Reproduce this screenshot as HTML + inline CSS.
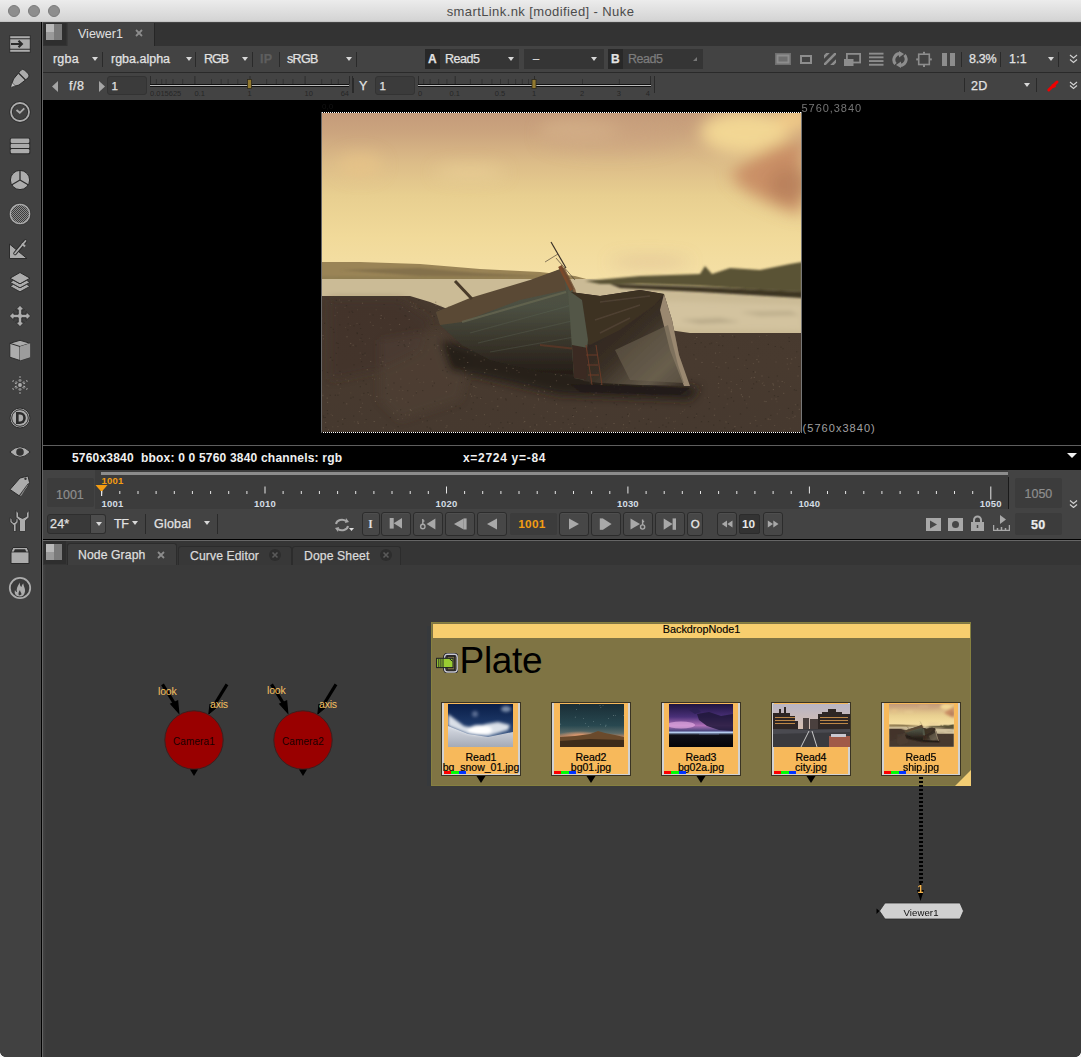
<!DOCTYPE html>
<html><head><meta charset="utf-8"><style>
*{box-sizing:border-box;margin:0;padding:0}
html,body{width:1081px;height:1057px;overflow:hidden;background:#3b3b3b;font-family:"Liberation Sans",sans-serif}
.a{position:absolute}
.t{white-space:nowrap;line-height:1}
.tb{color:#e2e2e2;font-size:12.5px;letter-spacing:0.2px;-webkit-text-stroke:0.25px currentColor}
.dd{position:absolute;width:0;height:0;border-left:3px solid transparent;border-right:3px solid transparent;border-top:4px solid #d8d8d8}
</style></head><body>
<div class="a" style="left:0px;top:0px;width:1081px;height:22px;background:linear-gradient(#ececec,#d2d2d2)"></div>
<div class="a" style="left:0px;top:21px;width:1081px;height:1px;background:#c4c4c4"></div>
<div class="a" style="left:0px;top:22px;width:1081px;height:1px;background:#1c1c1c"></div>
<div class="a" style="left:8px;top:5px;width:12px;height:12px;border-radius:50%;background:#8e8e8e;border:1px solid #7b7b7b"></div>
<div class="a" style="left:28px;top:5px;width:12px;height:12px;border-radius:50%;background:#8e8e8e;border:1px solid #7b7b7b"></div>
<div class="a" style="left:48px;top:5px;width:12px;height:12px;border-radius:50%;background:#8e8e8e;border:1px solid #7b7b7b"></div>
<div class="a t " style="left:0px;top:5px;width:1081px;text-align:center;font-size:13px;letter-spacing:0.4px;color:#4b4b4b;padding-left:0px">smartLink.nk [modified] - Nuke</div>
<div class="a" style="left:0px;top:22px;width:41px;height:1035px;background:#414141"></div>
<div class="a" style="left:40px;top:22px;width:1px;height:1035px;background:#474747"></div>
<div class="a" style="left:41px;top:22px;width:1px;height:1035px;background:#000"></div>
<div class="a" style="left:42px;top:22px;width:1px;height:1035px;background:#646464"></div>
<svg class="a" style="left:8px;top:32px;" width="24" height="24" viewBox="0 0 24 24"><rect x="1.7" y="3.7" width="20.6" height="16.6" fill="#acacac" stroke="#2b2b2b" stroke-width="1"/><path d="M1.7 6.8h20.6M1.7 17.2h20.6" stroke="#2b2b2b" stroke-width="1.1"/><path d="M3 12h10M10.5 8.8l3.3 3.2-3.3 3.2" stroke="#2b2b2b" stroke-width="2.2" fill="none"/></svg>
<svg class="a" style="left:8px;top:66px;" width="24" height="24" viewBox="0 0 24 24"><path d="M2.6 21.4L5.5 13L12.5 4.5Q14.5 2.5 16.5 4L20.5 8Q22 10 20 12L11 19z" fill="#acacac" stroke="#2b2b2b" stroke-width="1"/><path d="M10.5 7L17.5 14" stroke="#2b2b2b" stroke-width="1.3"/><path d="M2.6 21.4l1.5-4.8 3.3 3.3z" fill="#c4c4c4" stroke="#2b2b2b" stroke-width="0.6"/></svg>
<svg class="a" style="left:8px;top:100px;" width="24" height="24" viewBox="0 0 24 24"><circle cx="12" cy="12" r="9" fill="none" stroke="#2b2b2b" stroke-width="3.4"/><circle cx="12" cy="12" r="9" fill="none" stroke="#acacac" stroke-width="1.8"/><path d="M8.5 10l3.3 2.8 4.5-4.5" stroke="#acacac" stroke-width="1.8" fill="none"/></svg>
<svg class="a" style="left:8px;top:134px;" width="24" height="24" viewBox="0 0 24 24"><rect x="1.7" y="3.7" width="20.6" height="16.6" rx="1.5" fill="#2b2b2b"/><rect x="2.7" y="4.6" width="18.6" height="4.3" rx="1.2" fill="#acacac"/><rect x="2.7" y="9.8" width="18.6" height="4.3" rx="1.2" fill="#acacac"/><rect x="2.7" y="15" width="18.6" height="4.3" rx="1.2" fill="#acacac"/></svg>
<svg class="a" style="left:8px;top:168px;" width="24" height="24" viewBox="0 0 24 24"><circle cx="12" cy="12" r="9.6" fill="#acacac" stroke="#2b2b2b" stroke-width="1"/><path d="M12 2.5V12L3.9 16.7M12 12l8.1 4.7" stroke="#2b2b2b" stroke-width="1.3" fill="none"/></svg>
<svg class="a" style="left:8px;top:201.5px;" width="24" height="24" viewBox="0 0 24 24"><defs><pattern id="chk" width="2" height="2" patternUnits="userSpaceOnUse"><rect width="2" height="2" fill="#8a8a8a"/><rect width="1" height="1" fill="#3c3c3c"/><rect x="1" y="1" width="1" height="1" fill="#3c3c3c"/></pattern></defs><circle cx="12" cy="12" r="9.8" fill="url(#chk)" stroke="#acacac" stroke-width="1.6"/><circle cx="12" cy="12" r="10.8" fill="none" stroke="#2b2b2b" stroke-width="0.6"/></svg>
<svg class="a" style="left:7px;top:236.5px;" width="24" height="24" viewBox="0 0 24 24"><path d="M2.5 7L2.5 21.5H20z" fill="#acacac" stroke="#2b2b2b" stroke-width="1"/><path d="M8 16.5L18.5 4" stroke="#2b2b2b" stroke-width="3.5" stroke-linecap="round"/><path d="M8 16.5L18.5 4" stroke="#acacac" stroke-width="1.8" stroke-linecap="round"/><path d="M15 6.5l3 3" stroke="#acacac" stroke-width="2"/></svg>
<svg class="a" style="left:8px;top:270px;" width="24" height="24" viewBox="0 0 24 24"><path d="M2 16.3L12 21.8L22 16.3L18.5 14.3L12 17.8L5.5 14.3z" fill="#acacac" stroke="#2b2b2b" stroke-width="0.9"/><path d="M2 12.3L12 17.8L22 12.3L18.5 10.3L12 13.8L5.5 10.3z" fill="#acacac" stroke="#2b2b2b" stroke-width="0.9"/><path d="M12 2.5L22 8.2L12 13.8L2 8.2z" fill="#acacac" stroke="#2b2b2b" stroke-width="1"/></svg>
<svg class="a" style="left:8px;top:304px;" width="24" height="24" viewBox="0 0 24 24"><path d="M12 1.3L16.3 5.8H13.8V10.2H18.2V7.7L22.7 12L18.2 16.3V13.8H13.8V18.2H16.3L12 22.7L7.7 18.2H10.2V13.8H5.8V16.3L1.3 12L5.8 7.7V10.2H10.2V5.8H7.7z" fill="#acacac" stroke="#2b2b2b" stroke-width="1"/></svg>
<svg class="a" style="left:8px;top:338px;" width="24" height="24" viewBox="0 0 24 24"><path d="M12 2.3L22.2 5.3V19.2L12 22.5L1.8 19.2V5.3z" fill="#acacac" stroke="#2b2b2b" stroke-width="1"/><path d="M1.8 5.3L12 8.5L22.2 5.3M12 8.5V22.5" stroke="#2b2b2b" stroke-width="1" fill="none"/><path d="M12 8.5L22.2 5.3V19.2L12 22.5z" fill="#9c9c9c"/></svg>
<svg class="a" style="left:8px;top:373px;" width="24" height="24" viewBox="0 0 24 24"><circle cx="12" cy="12" r="2" fill="#acacac"/><circle cx="12.0" cy="7.5" r="1.4" fill="#acacac"/><circle cx="12.0" cy="4.0" r="1" fill="#acacac"/><path d="M12.0 10.0L12.0 2.5" stroke="#2e2e2e" stroke-width="0.6"/><circle cx="15.9" cy="9.8" r="1.4" fill="#acacac"/><circle cx="18.9" cy="8.0" r="1" fill="#acacac"/><path d="M13.7 11.0L20.2 7.3" stroke="#2e2e2e" stroke-width="0.6"/><circle cx="15.9" cy="14.2" r="1.4" fill="#acacac"/><circle cx="18.9" cy="16.0" r="1" fill="#acacac"/><path d="M13.7 13.0L20.2 16.8" stroke="#2e2e2e" stroke-width="0.6"/><circle cx="12.0" cy="16.5" r="1.4" fill="#acacac"/><circle cx="12.0" cy="20.0" r="1" fill="#acacac"/><path d="M12.0 14.0L12.0 21.5" stroke="#2e2e2e" stroke-width="0.6"/><circle cx="8.1" cy="14.2" r="1.4" fill="#acacac"/><circle cx="5.1" cy="16.0" r="1" fill="#acacac"/><path d="M10.3 13.0L3.8 16.8" stroke="#2e2e2e" stroke-width="0.6"/><circle cx="8.1" cy="9.8" r="1.4" fill="#acacac"/><circle cx="5.1" cy="8.0" r="1" fill="#acacac"/><path d="M10.3 11.0L3.8 7.2" stroke="#2e2e2e" stroke-width="0.6"/></svg>
<svg class="a" style="left:8px;top:405.6px;" width="24" height="24" viewBox="0 0 24 24"><circle cx="12" cy="12" r="10" fill="#acacac" stroke="#2b2b2b" stroke-width="1"/><circle cx="12" cy="12" r="8.3" fill="none" stroke="#2b2b2b" stroke-width="1"/><path d="M8 6h3.8a6 6 0 0 1 0 12H8z" fill="#2b2b2b"/><path d="M10.6 8.6h1.2a3.4 3.4 0 0 1 0 6.8h-1.2z" fill="#acacac"/></svg>
<svg class="a" style="left:8px;top:440px;" width="24" height="24" viewBox="0 0 24 24"><path d="M1.8 12Q12 1.5 22.2 12Q12 22.5 1.8 12z" fill="#acacac" stroke="#2b2b2b" stroke-width="1"/><circle cx="12" cy="12" r="3.8" fill="#333"/></svg>
<svg class="a" style="left:8px;top:474px;" width="24" height="24" viewBox="0 0 24 24"><path d="M2 15.5L12 4L20 2L21.5 8.5L19.5 13L11.5 22z" fill="#acacac" stroke="#2b2b2b" stroke-width="1"/><path d="M21.5 8.5L13.5 21.5L11.5 22z" fill="#8e8e8e"/><path d="M20.3 9.5L11 22" stroke="#2b2b2b" stroke-width="0.9"/><circle cx="17.5" cy="4.8" r="1.2" fill="#333"/></svg>
<svg class="a" style="left:8px;top:509px;" width="24" height="24" viewBox="0 0 24 24"><path d="M5.5 22.5V16L2 13.2V8.5L4 10.2V12.5L6 13.8L8 12.5V10.2L10 8.5V13.2L8 15.5V22.5z" fill="#acacac" stroke="#2b2b2b" stroke-width="0.8"/><path d="M11.5 22.5V11.5L8 8.5V1.5L10.5 4V7.5L14.5 9.5L18.5 7.5V4L21 1.5V8.5L17.5 11.5V22.5z" fill="#acacac" stroke="#2b2b2b" stroke-width="0.8"/></svg>
<svg class="a" style="left:8px;top:542.5px;" width="24" height="24" viewBox="0 0 24 24"><path d="M3 9L5 4.5H19L21 9V20.5H3z" fill="#acacac" stroke="#2b2b2b" stroke-width="1"/><path d="M5.7 9L6.8 6.3H17.2L18.3 9z" fill="#2e2e2e"/><path d="M3 9H21" stroke="#2b2b2b" stroke-width="0.8"/></svg>
<svg class="a" style="left:8px;top:576px;" width="24" height="24" viewBox="0 0 24 24"><circle cx="12" cy="12" r="10.2" fill="#3a3a3a" stroke="#acacac" stroke-width="1.8"/><path d="M12 20.5C7.5 20.5 6 17 7 14C7.5 15.5 8.5 16 9 16C8 13 9.5 10 12 6.5C11.5 9 12.5 10.5 13.5 11C13.5 9.5 14.5 8 15.5 7.5C15 9.5 17.5 12 17 15.5C16.5 18.5 15 20.5 12 20.5z" fill="#acacac"/><path d="M11 19.5C10 18 10.5 16 12 14C12 16 13.5 16.5 13.5 18.5z" fill="#3a3a3a"/></svg>
<div class="a" style="left:43px;top:22px;width:1038px;height:518px;background:#434343"></div>
<div class="a" style="left:43px;top:23px;width:1038px;height:23px;background:#333"></div>
<div class="a" style="left:44px;top:23px;width:22px;height:22px;background:#2e2e2e"></div>
<div class="a" style="left:46px;top:24px;width:16px;height:16px;background:linear-gradient(90deg,#b9b9b9 0 8px,#7b7b7b 8px);"></div>
<div class="a" style="left:46px;top:32px;width:8px;height:8px;background:#9a9a9a"></div>
<div class="a" style="left:67px;top:23px;width:88px;height:23px;background:#434343;border-right:1px solid #262626;border-left:1px solid #3a3a3a"></div>
<div class="a t " style="left:78px;top:28px;font-size:12.5px;color:#e0e0e0">Viewer1</div>
<svg class="a" style="left:135px;top:29px;" width="8" height="8" viewBox="0 0 8 8"><path d="M1 1l6 6M7 1l-6 6" stroke="#8c8c8c" stroke-width="1.8"/></svg>
<div class="a" style="left:43px;top:72px;width:1038px;height:1px;background:#2a2a2a"></div>
<div class="a t tb" style="left:53px;top:52.82px;font-size:12.5px;">rgba</div>
<div class="dd" style="left:92px;top:57px"></div>
<div class="a" style="left:102px;top:52px;width:1px;height:15px;background:#2a2a2a"></div>
<div class="a t tb" style="left:111px;top:52.82px;font-size:12.5px;letter-spacing:0px">rgba.alpha</div>
<div class="dd" style="left:186px;top:57px"></div>
<div class="a" style="left:195px;top:52px;width:1px;height:15px;background:#2a2a2a"></div>
<div class="a t tb" style="left:204px;top:52.82px;font-size:12.5px;letter-spacing:-1px">RGB</div>
<div class="dd" style="left:242px;top:57px"></div>
<div class="a" style="left:252px;top:52px;width:1px;height:15px;background:#2a2a2a"></div>
<div class="a t tb" style="left:260px;top:52.82px;font-size:12.5px;color:#5e5e5e;font-weight:bold">IP</div>
<div class="a" style="left:279px;top:52px;width:1px;height:15px;background:#2a2a2a"></div>
<div class="a t tb" style="left:287px;top:52.82px;font-size:12.5px;letter-spacing:-0.7px">sRGB</div>
<div class="dd" style="left:346px;top:57px"></div>
<div class="a" style="left:356px;top:52px;width:1px;height:15px;background:#2a2a2a"></div>
<div class="a" style="left:425px;top:49px;width:15px;height:20px;background:#282828"></div>
<div class="a t tb" style="left:428px;top:53.24px;font-size:12px;font-weight:bold">A</div>
<div class="a" style="left:440px;top:49px;width:79px;height:20px;background:#353535"></div>
<div class="a t tb" style="left:445px;top:52.82px;font-size:12.5px;letter-spacing:-0.5px">Read5</div>
<div class="dd" style="left:508px;top:57px"></div>
<div class="a" style="left:524px;top:49px;width:80px;height:20px;background:#353535"></div>
<div class="a t tb" style="left:533px;top:52.82px;font-size:12.5px;font-size:11px">&#8211;</div>
<div class="dd" style="left:591px;top:57px"></div>
<div class="a" style="left:608px;top:49px;width:15px;height:20px;background:#282828"></div>
<div class="a t tb" style="left:611px;top:53.24px;font-size:12px;font-weight:bold">B</div>
<div class="a" style="left:623px;top:49px;width:80px;height:20px;background:#353535"></div>
<div class="a t tb" style="left:628px;top:52.82px;font-size:12.5px;letter-spacing:-0.5px;color:#7c7c7c">Read5</div>
<svg class="a" style="left:692px;top:56px;" width="6" height="6" viewBox="0 0 6 6"><path d="M5 1L1 5h4z" fill="#777"/></svg>
<svg class="a" style="left:775px;top:53px;" width="16" height="12" viewBox="0 0 16 12"><rect x="0" y="0" width="16" height="12" fill="#6f6f6f"/><rect x="2.5" y="2.5" width="11" height="7" fill="none" stroke="#8d8d8d" stroke-width="2"/></svg>
<svg class="a" style="left:800px;top:55px;" width="12" height="9" viewBox="0 0 12 9"><rect x="1" y="1" width="10" height="7" fill="none" stroke="#8d8d8d" stroke-width="2"/></svg>
<svg class="a" style="left:824px;top:53px;" width="12" height="12" viewBox="0 0 12 12"><defs><clipPath id="cp1"><rect width="12" height="12"/></clipPath></defs><g clip-path="url(#cp1)" stroke="#8d8d8d" stroke-width="2.6"><path d="M-4 8L8 -4M0 12L12 0M4 16L16 4"/></g></svg>
<svg class="a" style="left:843px;top:52px;" width="19" height="15" viewBox="0 0 19 15"><rect x="3.9" y="1.9" width="13.2" height="8.6" fill="none" stroke="#8d8d8d" stroke-width="1.8"/><rect x="1" y="7" width="9.5" height="7" fill="#8d8d8d"/></svg>
<svg class="a" style="left:868px;top:52px;" width="16" height="14" viewBox="0 0 16 14"><rect x="1" y="0.7" width="14.5" height="1.9" fill="#8d8d8d"/><rect x="1" y="4.4" width="14.5" height="1.9" fill="#8d8d8d"/><rect x="1" y="8.1" width="14.5" height="1.9" fill="#8d8d8d"/><rect x="1" y="11.8" width="14.5" height="1.9" fill="#8d8d8d"/></svg>
<svg class="a" style="left:891px;top:51px;" width="18" height="17" viewBox="0 0 18 17"><path d="M9.5 2.5A6.3 6.3 0 0 0 4.5 13" stroke="#8d8d8d" stroke-width="3" fill="none"/><path d="M8.5 14.5A6.3 6.3 0 0 0 13.5 4" stroke="#8d8d8d" stroke-width="3" fill="none"/><path d="M8 0l5 3-5 3.5z" fill="#8d8d8d"/><path d="M10 17l-5-3 5-3.5z" fill="#8d8d8d"/></svg>
<svg class="a" style="left:915px;top:51px;" width="18" height="17" viewBox="0 0 18 17"><rect x="3.7" y="3.2" width="10.6" height="10.3" fill="none" stroke="#8d8d8d" stroke-width="1.6"/><rect x="8" y="0.8" width="2" height="2" fill="#8d8d8d"/><rect x="8" y="14" width="2" height="2" fill="#8d8d8d"/><rect x="1.2" y="7.4" width="2" height="2" fill="#8d8d8d"/><rect x="14.8" y="7.4" width="2" height="2" fill="#8d8d8d"/></svg>
<svg class="a" style="left:942px;top:53px;" width="13" height="13" viewBox="0 0 13 13"><rect x="0" y="0" width="5" height="13" fill="#8d8d8d"/><rect x="8" y="0" width="5" height="13" fill="#8d8d8d"/></svg>
<div class="a" style="left:961px;top:52px;width:1px;height:15px;background:#2a2a2a"></div>
<div class="a t tb" style="left:969px;top:52.82px;font-size:12.5px;letter-spacing:-0.3px">8.3%</div>
<div class="a" style="left:1000px;top:52px;width:1px;height:15px;background:#2a2a2a"></div>
<div class="a t tb" style="left:1009px;top:52.82px;font-size:12.5px;">1:1</div>
<div class="dd" style="left:1048px;top:57px"></div>
<div class="a" style="left:1058px;top:52px;width:1px;height:15px;background:#2a2a2a"></div>
<svg class="a" style="left:1069px;top:54px;" width="9" height="10" viewBox="0 0 9 10"><path d="M1 1l3.5 3 3.5-3M1 5.5l3.5 3 3.5-3" stroke="#cfcfcf" stroke-width="1.2" fill="none"/></svg>
<svg class="a" style="left:51.5px;top:80.5px;" width="7" height="11" viewBox="0 0 7 11"><path d="M6 0v11L0 5.5z" fill="#a5a5a5"/></svg>
<div class="a t tb" style="left:69px;top:80.42px;font-size:12.5px;letter-spacing:0.5px">f/8</div>
<svg class="a" style="left:98.5px;top:80.5px;" width="7" height="11" viewBox="0 0 7 11"><path d="M0 0v11l6-5.5z" fill="#a5a5a5"/></svg>
<div class="a" style="left:107px;top:76px;width:40px;height:19px;background:#3b3b3b;border:1px solid #333;border-radius:3px"></div>
<div class="a t tb" style="left:111.5px;top:81.47px;font-size:11.5px;">1</div>
<div class="a" style="left:353px;top:78px;width:1px;height:15px;background:#2a2a2a"></div>
<div class="a t tb" style="left:359px;top:79.92px;font-size:12.5px;">Y</div>
<div class="a" style="left:375px;top:76px;width:40px;height:19px;background:#3b3b3b;border:1px solid #333;border-radius:3px"></div>
<div class="a t tb" style="left:379.5px;top:81.47px;font-size:11.5px;">1</div>
<div class="a" style="left:964px;top:78px;width:1px;height:14px;background:#2a2a2a"></div>
<div class="a t tb" style="left:971px;top:79.92px;font-size:12.5px;">2D</div>
<div class="dd" style="left:1024px;top:83px"></div>
<div class="a" style="left:1036px;top:78px;width:1px;height:14px;background:#2a2a2a"></div>
<svg class="a" style="left:1046px;top:77px;" width="14" height="16" viewBox="0 0 14 16"><path d="M2.8 13L11 5" stroke="#f00000" stroke-width="3" stroke-linecap="round"/><path d="M5.5 7.5L9 6.5L10 10L7 11z" fill="#f00000"/></svg>
<svg class="a" style="left:1069px;top:81px;" width="9" height="9" viewBox="0 0 9 9"><path d="M1 1l3.5 3 3.5-3M1 4.5l3.5 3 3.5-3" stroke="#d4d4d4" stroke-width="1.1" fill="none"/></svg>
<svg class="a" style="left:150px;top:76px;" width="205" height="22" viewBox="0 0 205 22"><path d="M0.5 0V8" stroke="#2c2c2c" stroke-width="1"/><path d="M44.9 0V8" stroke="#2c2c2c" stroke-width="1"/><path d="M100.0 0V8" stroke="#2c2c2c" stroke-width="1"/><path d="M155.1 0V8" stroke="#2c2c2c" stroke-width="1"/><path d="M199.5 0V8" stroke="#2c2c2c" stroke-width="1"/><path d="M6.4 3V8" stroke="#333" stroke-width="1"/><path d="M11.7 3V8" stroke="#333" stroke-width="1"/><path d="M16.1 3V8" stroke="#333" stroke-width="1"/><path d="M23.0 3V8" stroke="#333" stroke-width="1"/><path d="M32.7 3V8" stroke="#333" stroke-width="1"/><path d="M61.5 3V8" stroke="#333" stroke-width="1"/><path d="M71.2 3V8" stroke="#333" stroke-width="1"/><path d="M78.1 3V8" stroke="#333" stroke-width="1"/><path d="M87.8 3V8" stroke="#333" stroke-width="1"/><path d="M116.6 3V8" stroke="#333" stroke-width="1"/><path d="M126.3 3V8" stroke="#333" stroke-width="1"/><path d="M133.2 3V8" stroke="#333" stroke-width="1"/><path d="M142.9 3V8" stroke="#333" stroke-width="1"/><path d="M171.7 3V8" stroke="#333" stroke-width="1"/><path d="M181.4 3V8" stroke="#333" stroke-width="1"/><path d="M188.3 3V8" stroke="#333" stroke-width="1"/><rect x="0" y="8" width="199" height="1" fill="#111"/><rect x="0" y="9" width="199" height="1" fill="#bdbdbd"/><rect x="0" y="10" width="199" height="1" fill="#111"/><path d="M202.5 0V17" stroke="#2a2a2a" stroke-width="1"/><text x="0.0" y="20" font-size="7.5" fill="#262626" text-anchor="start" font-family="Liberation Sans">0.015625</text><text x="44.4" y="20" font-size="7.5" fill="#262626" text-anchor="start" font-family="Liberation Sans">0.1</text><text x="99.5" y="20" font-size="7.5" fill="#262626" text-anchor="middle" font-family="Liberation Sans">1</text><text x="154.6" y="20" font-size="7.5" fill="#262626" text-anchor="start" font-family="Liberation Sans">10</text><text x="199.0" y="20" font-size="7.5" fill="#262626" text-anchor="end" font-family="Liberation Sans">64</text><rect x="97.5" y="3.5" width="4" height="9" fill="#937a30" stroke="#2e2a1c" stroke-width="0.8"/></svg>
<svg class="a" style="left:418px;top:76px;" width="239" height="22" viewBox="0 0 239 22"><path d="M0.5 0V8" stroke="#2c2c2c" stroke-width="1"/><path d="M37.2 0V8" stroke="#2c2c2c" stroke-width="1"/><path d="M116.5 0V8" stroke="#2c2c2c" stroke-width="1"/><path d="M232.5 0V8" stroke="#2c2c2c" stroke-width="1"/><path d="M5.7 3V8" stroke="#333" stroke-width="1"/><path d="M12.1 3V8" stroke="#333" stroke-width="1"/><path d="M20.6 3V8" stroke="#333" stroke-width="1"/><path d="M28.9 3V8" stroke="#333" stroke-width="1"/><path d="M52.4 3V8" stroke="#333" stroke-width="1"/><path d="M64.0 3V8" stroke="#333" stroke-width="1"/><path d="M73.9 3V8" stroke="#333" stroke-width="1"/><path d="M82.5 3V8" stroke="#333" stroke-width="1"/><path d="M90.4 3V8" stroke="#333" stroke-width="1"/><path d="M97.6 3V8" stroke="#333" stroke-width="1"/><path d="M104.3 3V8" stroke="#333" stroke-width="1"/><path d="M110.5 3V8" stroke="#333" stroke-width="1"/><path d="M164.5 3V8" stroke="#333" stroke-width="1"/><path d="M201.4 3V8" stroke="#333" stroke-width="1"/><rect x="0" y="8" width="233" height="1" fill="#111"/><rect x="0" y="9" width="233" height="1" fill="#bdbdbd"/><rect x="0" y="10" width="233" height="1" fill="#111"/><path d="M236.5 0V17" stroke="#2a2a2a" stroke-width="1"/><text x="0.0" y="20" font-size="7.5" fill="#262626" text-anchor="start" font-family="Liberation Sans">0</text><text x="36.7" y="20" font-size="7.5" fill="#262626" text-anchor="middle" font-family="Liberation Sans">0.1</text><text x="82.0" y="20" font-size="7.5" fill="#262626" text-anchor="middle" font-family="Liberation Sans">0.5</text><text x="116.0" y="20" font-size="7.5" fill="#262626" text-anchor="middle" font-family="Liberation Sans">1</text><text x="164.0" y="20" font-size="7.5" fill="#262626" text-anchor="middle" font-family="Liberation Sans">2</text><text x="200.9" y="20" font-size="7.5" fill="#262626" text-anchor="middle" font-family="Liberation Sans">3</text><text x="232.0" y="20" font-size="7.5" fill="#262626" text-anchor="end" font-family="Liberation Sans">4</text><rect x="114.0" y="3.5" width="4" height="9" fill="#937a30" stroke="#2e2a1c" stroke-width="0.8"/></svg>
<div class="a" style="left:43px;top:100px;width:1038px;height:370px;background:#000"></div>
<div class="a" style="left:43px;top:445px;width:1038px;height:1px;background:#5e5e5e"></div>
<svg class="a" style="left:321px;top:112px;" width="481" height="321" viewBox="0 0 481 321">
<defs>
<linearGradient id="sky" x1="0" y1="112" x2="0" y2="280" gradientUnits="userSpaceOnUse">
<stop offset="0" stop-color="#c49a7a"/><stop offset="0.12" stop-color="#cba47e"/><stop offset="0.3" stop-color="#dcbc88"/>
<stop offset="0.5" stop-color="#e8cf90"/><stop offset="0.75" stop-color="#f1da9a"/><stop offset="1" stop-color="#f5e0a6"/></linearGradient>
<filter id="b8" x="-50%" y="-50%" width="200%" height="200%"><feGaussianBlur stdDeviation="8"/></filter>
<filter id="b4" x="-50%" y="-50%" width="200%" height="200%"><feGaussianBlur stdDeviation="4"/></filter>
<filter id="b2" x="-30%" y="-30%" width="160%" height="160%"><feGaussianBlur stdDeviation="2"/></filter>
<filter id="b1" x="-20%" y="-20%" width="140%" height="140%"><feGaussianBlur stdDeviation="0.8"/></filter><filter id="b05" x="-10%" y="-10%" width="120%" height="120%"><feGaussianBlur stdDeviation="0.45"/></filter>
<linearGradient id="gnd" x1="0" y1="296" x2="0" y2="433" gradientUnits="userSpaceOnUse">
<stop offset="0" stop-color="#47392e"/><stop offset="0.5" stop-color="#483a2f"/><stop offset="1" stop-color="#46392f"/></linearGradient>
<linearGradient id="hull" x1="0" y1="270" x2="0" y2="375" gradientUnits="userSpaceOnUse">
<stop offset="0" stop-color="#525242"/><stop offset="0.35" stop-color="#4c5042"/><stop offset="0.7" stop-color="#38342a"/><stop offset="1" stop-color="#241c16"/></linearGradient>
<linearGradient id="hull2" x1="600" y1="300" x2="680" y2="385" gradientUnits="userSpaceOnUse">
<stop offset="0" stop-color="#2a2019"/><stop offset="0.45" stop-color="#3a3026"/><stop offset="0.8" stop-color="#625848"/><stop offset="1" stop-color="#3e342a"/></linearGradient>
</defs>
<g transform="translate(-321 -112)">
<rect x="321" y="112" width="481" height="321" fill="url(#sky)"/>
<g filter="url(#b8)">
<ellipse cx="360" cy="165" rx="22" ry="12" fill="#e8c488" opacity="0.7"/>
<ellipse cx="470" cy="172" rx="35" ry="7" fill="#ecd29a" opacity="0.6"/>
<ellipse cx="580" cy="130" rx="40" ry="10" fill="#e6c898" opacity="0.45"/>
<ellipse cx="745" cy="132" rx="45" ry="22" fill="#f6dc96" opacity="0.9"/><ellipse cx="795" cy="118" rx="20" ry="14" fill="#f2cc88" opacity="0.9"/>
<path d="M730 175Q770 140 802 140V215Q770 205 745 190z" fill="#c88a62" opacity="0.9"/>
<ellipse cx="790" cy="185" rx="22" ry="18" fill="#b47c5a" opacity="0.7"/>
<ellipse cx="610" cy="138" rx="70" ry="16" fill="#c8a07e" opacity="0.35"/>
<ellipse cx="650" cy="262" rx="40" ry="5" fill="#c8a088" opacity="0.4"/>
</g>
<!-- far hills left -->
<path d="M321 262L360 262L420 264L480 269L540 272L575 276L590 280L321 281z" fill="#9a8456"/>
<g filter="url(#b1)"><path d="M340 270L420 268L480 273L560 277L420 276z" fill="#7a6a46" opacity="0.7"/><path d="M321 276L450 277L560 279L590 281L321 281z" fill="#8a7a50" opacity="0.6"/></g>
<!-- water -->
<path d="M321 279L590 279L640 284L802 290L802 340L321 340z" fill="#cbbb96"/>
<g filter="url(#b2)"><path d="M620 300L802 305L802 330L640 328z" fill="#d6c6a2" opacity="0.7"/>
<path d="M680 320L720 318L740 322L700 324z" fill="#8a7a60" opacity="0.35"/><path d="M740 312L790 311L800 315L760 316z" fill="#8a7a60" opacity="0.3"/></g>
<!-- right land -->
<g filter="url(#b1)">
<path d="M585 281L640 276L700 274L705 266L712 274L730 268L760 270L790 264L802 262L802 292L760 290L700 286L640 284L600 284z" fill="#5a5236"/>
<path d="M610 284L700 287L802 292L802 298L700 292L620 288z" fill="#3e3424"/>
</g>
<!-- beach -->
<path d="M321 296L410 296L430 302L450 310L520 310L600 320L690 333L802 333L802 433L321 433z" fill="url(#gnd)"/>
<g filter="url(#b4)">
<path d="M330 300L400 300L430 320L420 350L380 370L330 380z" fill="#3e3228" opacity="0.55"/>
<path d="M380 340L440 330L470 360L460 400L400 420L380 400z" fill="#56463a" opacity="0.4"/>
<path d="M440 340L600 375L700 388L690 400L560 395L450 370z" fill="#231c16" opacity="0.9"/>
</g>
<rect x="578.8" y="346.7" width="1.2" height="1" fill="#6a5a48" opacity="0.55"/><rect x="362.3" y="353.9" width="1.2" height="1" fill="#2e261e" opacity="0.55"/><rect x="364.6" y="354.7" width="1.2" height="1" fill="#5e5040" opacity="0.55"/><rect x="380.5" y="327.4" width="1.2" height="1" fill="#5e5040" opacity="0.55"/><rect x="776.8" y="375.5" width="1.2" height="1" fill="#30281f" opacity="0.55"/><rect x="344.9" y="327.1" width="1.2" height="1" fill="#5e5040" opacity="0.55"/><rect x="733.9" y="336.4" width="1.2" height="1" fill="#2e261e" opacity="0.55"/><rect x="581.1" y="374.6" width="1.2" height="1" fill="#5e5040" opacity="0.55"/><rect x="600.7" y="383.9" width="1.2" height="1" fill="#7a6a58" opacity="0.55"/><rect x="367.9" y="393.8" width="1.2" height="1" fill="#5e5040" opacity="0.55"/><rect x="349.7" y="325.0" width="1.2" height="1" fill="#5e5040" opacity="0.55"/><rect x="602.7" y="358.6" width="1.2" height="1" fill="#7a6a58" opacity="0.55"/><rect x="440.5" y="321.4" width="1.2" height="1" fill="#2e261e" opacity="0.55"/><rect x="360.4" y="337.8" width="1.2" height="1" fill="#30281f" opacity="0.55"/><rect x="741.9" y="396.2" width="1.2" height="1" fill="#7a6a58" opacity="0.55"/><rect x="485.5" y="423.9" width="1.2" height="1" fill="#30281f" opacity="0.55"/><rect x="339.9" y="387.9" width="1.2" height="1" fill="#5e5040" opacity="0.55"/><rect x="596.6" y="416.1" width="1.2" height="1" fill="#7a6a58" opacity="0.55"/><rect x="484.6" y="344.6" width="1.2" height="1" fill="#30281f" opacity="0.55"/><rect x="599.9" y="359.0" width="1.2" height="1" fill="#6a5a48" opacity="0.55"/><rect x="775.4" y="361.5" width="1.2" height="1" fill="#6a5a48" opacity="0.55"/><rect x="350.2" y="392.4" width="1.2" height="1" fill="#5e5040" opacity="0.55"/><rect x="798.7" y="408.8" width="1.2" height="1" fill="#7a6a58" opacity="0.55"/><rect x="665.7" y="417.6" width="1.2" height="1" fill="#7a6a58" opacity="0.55"/><rect x="331.9" y="359.8" width="1.2" height="1" fill="#2e261e" opacity="0.55"/><rect x="614.9" y="364.1" width="1.2" height="1" fill="#2e261e" opacity="0.55"/><rect x="440.1" y="350.2" width="1.2" height="1" fill="#30281f" opacity="0.55"/><rect x="359.8" y="358.1" width="1.2" height="1" fill="#5e5040" opacity="0.55"/><rect x="528.1" y="371.8" width="1.2" height="1" fill="#30281f" opacity="0.55"/><rect x="795.5" y="389.9" width="1.2" height="1" fill="#30281f" opacity="0.55"/><rect x="405.8" y="328.5" width="1.2" height="1" fill="#2e261e" opacity="0.55"/><rect x="326.8" y="410.0" width="1.2" height="1" fill="#2e261e" opacity="0.55"/><rect x="522.5" y="347.2" width="1.2" height="1" fill="#5e5040" opacity="0.55"/><rect x="734.3" y="426.2" width="1.2" height="1" fill="#6a5a48" opacity="0.55"/><rect x="540.6" y="415.5" width="1.2" height="1" fill="#5e5040" opacity="0.55"/><rect x="509.7" y="351.3" width="1.2" height="1" fill="#6a5a48" opacity="0.55"/><rect x="552.6" y="351.5" width="1.2" height="1" fill="#2e261e" opacity="0.55"/><rect x="353.4" y="325.4" width="1.2" height="1" fill="#2e261e" opacity="0.55"/><rect x="373.9" y="378.7" width="1.2" height="1" fill="#6a5a48" opacity="0.55"/><rect x="321.1" y="317.6" width="1.2" height="1" fill="#6a5a48" opacity="0.55"/><rect x="777.4" y="380.5" width="1.2" height="1" fill="#6a5a48" opacity="0.55"/><rect x="741.6" y="380.5" width="1.2" height="1" fill="#2e261e" opacity="0.55"/><rect x="626.2" y="426.9" width="1.2" height="1" fill="#5e5040" opacity="0.55"/><rect x="729.3" y="432.1" width="1.2" height="1" fill="#30281f" opacity="0.55"/><rect x="390.3" y="399.0" width="1.2" height="1" fill="#7a6a58" opacity="0.55"/><rect x="551.2" y="391.1" width="1.2" height="1" fill="#5e5040" opacity="0.55"/><rect x="332.1" y="426.3" width="1.2" height="1" fill="#5e5040" opacity="0.55"/><rect x="495.0" y="390.8" width="1.2" height="1" fill="#6a5a48" opacity="0.55"/><rect x="727.7" y="367.5" width="1.2" height="1" fill="#2e261e" opacity="0.55"/><rect x="581.5" y="365.4" width="1.2" height="1" fill="#2e261e" opacity="0.55"/><rect x="616.0" y="404.2" width="1.2" height="1" fill="#2e261e" opacity="0.55"/><rect x="708.7" y="408.3" width="1.2" height="1" fill="#2e261e" opacity="0.55"/><rect x="417.2" y="364.0" width="1.2" height="1" fill="#6a5a48" opacity="0.55"/><rect x="797.0" y="404.5" width="1.2" height="1" fill="#30281f" opacity="0.55"/><rect x="445.7" y="391.2" width="1.2" height="1" fill="#7a6a58" opacity="0.55"/><rect x="536.1" y="424.4" width="1.2" height="1" fill="#7a6a58" opacity="0.55"/><rect x="780.4" y="346.6" width="1.2" height="1" fill="#2e261e" opacity="0.55"/><rect x="370.1" y="360.9" width="1.2" height="1" fill="#7a6a58" opacity="0.55"/><rect x="419.3" y="381.9" width="1.2" height="1" fill="#5e5040" opacity="0.55"/><rect x="725.2" y="362.2" width="1.2" height="1" fill="#7a6a58" opacity="0.55"/><rect x="638.7" y="420.7" width="1.2" height="1" fill="#2e261e" opacity="0.55"/><rect x="700.6" y="342.2" width="1.2" height="1" fill="#30281f" opacity="0.55"/><rect x="543.8" y="398.1" width="1.2" height="1" fill="#6a5a48" opacity="0.55"/><rect x="382.1" y="317.6" width="1.2" height="1" fill="#30281f" opacity="0.55"/><rect x="718.6" y="430.3" width="1.2" height="1" fill="#7a6a58" opacity="0.55"/><rect x="396.0" y="371.6" width="1.2" height="1" fill="#6a5a48" opacity="0.55"/><rect x="327.9" y="429.0" width="1.2" height="1" fill="#6a5a48" opacity="0.55"/><rect x="574.3" y="424.0" width="1.2" height="1" fill="#30281f" opacity="0.55"/><rect x="423.3" y="365.2" width="1.2" height="1" fill="#5e5040" opacity="0.55"/><rect x="477.8" y="371.0" width="1.2" height="1" fill="#2e261e" opacity="0.55"/><rect x="350.3" y="397.6" width="1.2" height="1" fill="#30281f" opacity="0.55"/><rect x="639.7" y="407.8" width="1.2" height="1" fill="#5e5040" opacity="0.55"/><rect x="523.3" y="421.8" width="1.2" height="1" fill="#5e5040" opacity="0.55"/><rect x="383.9" y="317.6" width="1.2" height="1" fill="#5e5040" opacity="0.55"/><rect x="330.0" y="356.9" width="1.2" height="1" fill="#2e261e" opacity="0.55"/><rect x="613.7" y="402.5" width="1.2" height="1" fill="#2e261e" opacity="0.55"/><rect x="403.9" y="361.4" width="1.2" height="1" fill="#6a5a48" opacity="0.55"/><rect x="570.3" y="372.5" width="1.2" height="1" fill="#6a5a48" opacity="0.55"/><rect x="413.0" y="302.7" width="1.2" height="1" fill="#6a5a48" opacity="0.55"/><rect x="565.2" y="373.4" width="1.2" height="1" fill="#6a5a48" opacity="0.55"/><rect x="534.2" y="380.3" width="1.2" height="1" fill="#5e5040" opacity="0.55"/><rect x="454.3" y="366.1" width="1.2" height="1" fill="#30281f" opacity="0.55"/><rect x="572.7" y="416.1" width="1.2" height="1" fill="#7a6a58" opacity="0.55"/><rect x="764.9" y="418.4" width="1.2" height="1" fill="#2e261e" opacity="0.55"/><rect x="379.5" y="357.1" width="1.2" height="1" fill="#6a5a48" opacity="0.55"/><rect x="643.8" y="355.3" width="1.2" height="1" fill="#2e261e" opacity="0.55"/><rect x="643.0" y="403.6" width="1.2" height="1" fill="#2e261e" opacity="0.55"/><rect x="772.9" y="384.5" width="1.2" height="1" fill="#7a6a58" opacity="0.55"/><rect x="389.8" y="417.1" width="1.2" height="1" fill="#30281f" opacity="0.55"/><rect x="426.6" y="426.5" width="1.2" height="1" fill="#30281f" opacity="0.55"/><rect x="660.7" y="432.2" width="1.2" height="1" fill="#30281f" opacity="0.55"/><rect x="474.2" y="395.2" width="1.2" height="1" fill="#6a5a48" opacity="0.55"/><rect x="483.6" y="359.4" width="1.2" height="1" fill="#6a5a48" opacity="0.55"/><rect x="505.9" y="367.4" width="1.2" height="1" fill="#7a6a58" opacity="0.55"/><rect x="794.8" y="404.2" width="1.2" height="1" fill="#6a5a48" opacity="0.55"/><rect x="361.4" y="334.0" width="1.2" height="1" fill="#2e261e" opacity="0.55"/><rect x="524.1" y="421.0" width="1.2" height="1" fill="#7a6a58" opacity="0.55"/><rect x="516.3" y="370.0" width="1.2" height="1" fill="#5e5040" opacity="0.55"/><rect x="595.5" y="392.3" width="1.2" height="1" fill="#6a5a48" opacity="0.55"/><rect x="455.2" y="405.7" width="1.2" height="1" fill="#2e261e" opacity="0.55"/><rect x="772.3" y="383.3" width="1.2" height="1" fill="#7a6a58" opacity="0.55"/><rect x="361.3" y="413.4" width="1.2" height="1" fill="#6a5a48" opacity="0.55"/><rect x="448.2" y="313.5" width="1.2" height="1" fill="#6a5a48" opacity="0.55"/><rect x="484.1" y="372.2" width="1.2" height="1" fill="#7a6a58" opacity="0.55"/><rect x="662.3" y="424.6" width="1.2" height="1" fill="#2e261e" opacity="0.55"/><rect x="447.0" y="321.6" width="1.2" height="1" fill="#7a6a58" opacity="0.55"/><rect x="623.4" y="369.2" width="1.2" height="1" fill="#2e261e" opacity="0.55"/><rect x="460.5" y="365.0" width="1.2" height="1" fill="#2e261e" opacity="0.55"/><rect x="451.1" y="406.3" width="1.2" height="1" fill="#7a6a58" opacity="0.55"/><rect x="338.8" y="299.5" width="1.2" height="1" fill="#5e5040" opacity="0.55"/><rect x="549.4" y="424.1" width="1.2" height="1" fill="#6a5a48" opacity="0.55"/><rect x="637.7" y="385.4" width="1.2" height="1" fill="#30281f" opacity="0.55"/><rect x="583.6" y="417.9" width="1.2" height="1" fill="#5e5040" opacity="0.55"/><rect x="431.4" y="324.0" width="1.2" height="1" fill="#2e261e" opacity="0.55"/><rect x="515.7" y="344.3" width="1.2" height="1" fill="#6a5a48" opacity="0.55"/><rect x="621.8" y="416.7" width="1.2" height="1" fill="#30281f" opacity="0.55"/><rect x="399.5" y="308.5" width="1.2" height="1" fill="#30281f" opacity="0.55"/><rect x="739.7" y="388.2" width="1.2" height="1" fill="#7a6a58" opacity="0.55"/><rect x="609.0" y="391.2" width="1.2" height="1" fill="#6a5a48" opacity="0.55"/><rect x="783.6" y="429.3" width="1.2" height="1" fill="#5e5040" opacity="0.55"/><rect x="409.0" y="342.6" width="1.2" height="1" fill="#6a5a48" opacity="0.55"/><rect x="549.3" y="365.4" width="1.2" height="1" fill="#2e261e" opacity="0.55"/><rect x="440.4" y="402.6" width="1.2" height="1" fill="#6a5a48" opacity="0.55"/><rect x="448.1" y="309.2" width="1.2" height="1" fill="#30281f" opacity="0.55"/><rect x="603.3" y="350.6" width="1.2" height="1" fill="#7a6a58" opacity="0.55"/><rect x="602.7" y="369.0" width="1.2" height="1" fill="#2e261e" opacity="0.55"/><rect x="637.3" y="394.4" width="1.2" height="1" fill="#5e5040" opacity="0.55"/><rect x="669.3" y="384.5" width="1.2" height="1" fill="#6a5a48" opacity="0.55"/><rect x="717.8" y="394.2" width="1.2" height="1" fill="#5e5040" opacity="0.55"/><rect x="622.7" y="396.8" width="1.2" height="1" fill="#5e5040" opacity="0.55"/><rect x="388.0" y="368.2" width="1.2" height="1" fill="#5e5040" opacity="0.55"/><rect x="594.4" y="407.6" width="1.2" height="1" fill="#6a5a48" opacity="0.55"/><rect x="718.5" y="376.4" width="1.2" height="1" fill="#2e261e" opacity="0.55"/><rect x="361.9" y="302.7" width="1.2" height="1" fill="#7a6a58" opacity="0.55"/><rect x="782.5" y="348.2" width="1.2" height="1" fill="#30281f" opacity="0.55"/><rect x="589.7" y="382.4" width="1.2" height="1" fill="#5e5040" opacity="0.55"/><rect x="648.4" y="363.5" width="1.2" height="1" fill="#6a5a48" opacity="0.55"/><rect x="769.5" y="419.1" width="1.2" height="1" fill="#6a5a48" opacity="0.55"/><rect x="356.8" y="333.1" width="1.2" height="1" fill="#2e261e" opacity="0.55"/><rect x="432.0" y="385.4" width="1.2" height="1" fill="#30281f" opacity="0.55"/><rect x="558.6" y="349.0" width="1.2" height="1" fill="#30281f" opacity="0.55"/><rect x="758.9" y="336.1" width="1.2" height="1" fill="#6a5a48" opacity="0.55"/><rect x="617.8" y="384.4" width="1.2" height="1" fill="#6a5a48" opacity="0.55"/><rect x="609.5" y="342.1" width="1.2" height="1" fill="#7a6a58" opacity="0.55"/><rect x="553.0" y="363.1" width="1.2" height="1" fill="#6a5a48" opacity="0.55"/><rect x="653.9" y="388.9" width="1.2" height="1" fill="#7a6a58" opacity="0.55"/><rect x="545.1" y="401.3" width="1.2" height="1" fill="#5e5040" opacity="0.55"/><rect x="416.8" y="430.0" width="1.2" height="1" fill="#30281f" opacity="0.55"/><rect x="329.4" y="359.4" width="1.2" height="1" fill="#5e5040" opacity="0.55"/><rect x="786.7" y="358.1" width="1.2" height="1" fill="#7a6a58" opacity="0.55"/><rect x="507.1" y="421.7" width="1.2" height="1" fill="#2e261e" opacity="0.55"/><rect x="356.9" y="309.3" width="1.2" height="1" fill="#5e5040" opacity="0.55"/><rect x="446.9" y="345.9" width="1.2" height="1" fill="#5e5040" opacity="0.55"/><rect x="715.5" y="366.2" width="1.2" height="1" fill="#6a5a48" opacity="0.55"/><rect x="752.8" y="363.1" width="1.2" height="1" fill="#6a5a48" opacity="0.55"/><rect x="397.5" y="426.2" width="1.2" height="1" fill="#30281f" opacity="0.55"/><rect x="516.0" y="395.9" width="1.2" height="1" fill="#30281f" opacity="0.55"/><rect x="682.1" y="411.1" width="1.2" height="1" fill="#6a5a48" opacity="0.55"/><rect x="326.6" y="397.6" width="1.2" height="1" fill="#7a6a58" opacity="0.55"/><rect x="500.0" y="350.4" width="1.2" height="1" fill="#5e5040" opacity="0.55"/><rect x="357.7" y="422.9" width="1.2" height="1" fill="#7a6a58" opacity="0.55"/><rect x="731.9" y="335.2" width="1.2" height="1" fill="#6a5a48" opacity="0.55"/><rect x="722.5" y="335.8" width="1.2" height="1" fill="#2e261e" opacity="0.55"/><rect x="440.9" y="333.1" width="1.2" height="1" fill="#5e5040" opacity="0.55"/><rect x="472.8" y="402.2" width="1.2" height="1" fill="#30281f" opacity="0.55"/><rect x="746.3" y="407.4" width="1.2" height="1" fill="#30281f" opacity="0.55"/><rect x="760.4" y="424.9" width="1.2" height="1" fill="#5e5040" opacity="0.55"/><rect x="418.9" y="308.0" width="1.2" height="1" fill="#30281f" opacity="0.55"/><rect x="537.9" y="399.4" width="1.2" height="1" fill="#7a6a58" opacity="0.55"/><rect x="554.6" y="421.0" width="1.2" height="1" fill="#5e5040" opacity="0.55"/><rect x="382.2" y="361.2" width="1.2" height="1" fill="#7a6a58" opacity="0.55"/><rect x="676.3" y="385.8" width="1.2" height="1" fill="#30281f" opacity="0.55"/><rect x="589.1" y="350.6" width="1.2" height="1" fill="#2e261e" opacity="0.55"/><rect x="561.8" y="407.4" width="1.2" height="1" fill="#5e5040" opacity="0.55"/><rect x="426.8" y="420.3" width="1.2" height="1" fill="#30281f" opacity="0.55"/><rect x="526.6" y="371.5" width="1.2" height="1" fill="#2e261e" opacity="0.55"/><rect x="364.6" y="343.5" width="1.2" height="1" fill="#6a5a48" opacity="0.55"/><rect x="474.6" y="347.1" width="1.2" height="1" fill="#5e5040" opacity="0.55"/><rect x="418.2" y="299.7" width="1.2" height="1" fill="#30281f" opacity="0.55"/><rect x="505.1" y="398.4" width="1.2" height="1" fill="#2e261e" opacity="0.55"/><rect x="502.3" y="343.0" width="1.2" height="1" fill="#6a5a48" opacity="0.55"/><rect x="560.6" y="375.1" width="1.2" height="1" fill="#7a6a58" opacity="0.55"/><rect x="381.5" y="365.5" width="1.2" height="1" fill="#2e261e" opacity="0.55"/><rect x="365.5" y="419.0" width="1.2" height="1" fill="#30281f" opacity="0.55"/><rect x="513.3" y="357.6" width="1.2" height="1" fill="#7a6a58" opacity="0.55"/><rect x="729.2" y="415.7" width="1.2" height="1" fill="#6a5a48" opacity="0.55"/><rect x="382.2" y="354.8" width="1.2" height="1" fill="#30281f" opacity="0.55"/><rect x="786.7" y="363.6" width="1.2" height="1" fill="#6a5a48" opacity="0.55"/><rect x="509.3" y="423.0" width="1.2" height="1" fill="#5e5040" opacity="0.55"/><rect x="732.5" y="429.2" width="1.2" height="1" fill="#2e261e" opacity="0.55"/><rect x="394.1" y="429.2" width="1.2" height="1" fill="#6a5a48" opacity="0.55"/><rect x="773.9" y="395.2" width="1.2" height="1" fill="#30281f" opacity="0.55"/><rect x="361.9" y="402.7" width="1.2" height="1" fill="#6a5a48" opacity="0.55"/><rect x="763.5" y="384.8" width="1.2" height="1" fill="#7a6a58" opacity="0.55"/><rect x="783.9" y="382.2" width="1.2" height="1" fill="#5e5040" opacity="0.55"/><rect x="627.1" y="392.0" width="1.2" height="1" fill="#6a5a48" opacity="0.55"/><rect x="368.8" y="337.8" width="1.2" height="1" fill="#5e5040" opacity="0.55"/><rect x="413.2" y="332.5" width="1.2" height="1" fill="#5e5040" opacity="0.55"/><rect x="321.6" y="370.1" width="1.2" height="1" fill="#30281f" opacity="0.55"/><rect x="574.1" y="371.4" width="1.2" height="1" fill="#6a5a48" opacity="0.55"/><rect x="783.1" y="392.8" width="1.2" height="1" fill="#7a6a58" opacity="0.55"/><rect x="347.6" y="323.4" width="1.2" height="1" fill="#30281f" opacity="0.55"/><rect x="360.0" y="328.0" width="1.2" height="1" fill="#30281f" opacity="0.55"/><rect x="337.4" y="343.0" width="1.2" height="1" fill="#30281f" opacity="0.55"/><rect x="495.3" y="350.9" width="1.2" height="1" fill="#6a5a48" opacity="0.55"/><rect x="704.4" y="397.5" width="1.2" height="1" fill="#5e5040" opacity="0.55"/><rect x="353.4" y="364.4" width="1.2" height="1" fill="#2e261e" opacity="0.55"/><rect x="470.9" y="408.5" width="1.2" height="1" fill="#2e261e" opacity="0.55"/><rect x="621.0" y="380.0" width="1.2" height="1" fill="#2e261e" opacity="0.55"/><rect x="554.3" y="420.8" width="1.2" height="1" fill="#6a5a48" opacity="0.55"/><rect x="345.9" y="305.2" width="1.2" height="1" fill="#30281f" opacity="0.55"/><rect x="537.3" y="393.8" width="1.2" height="1" fill="#7a6a58" opacity="0.55"/><rect x="673.4" y="432.7" width="1.2" height="1" fill="#2e261e" opacity="0.55"/><rect x="771.2" y="398.5" width="1.2" height="1" fill="#6a5a48" opacity="0.55"/><rect x="471.0" y="395.7" width="1.2" height="1" fill="#7a6a58" opacity="0.55"/><rect x="794.8" y="357.2" width="1.2" height="1" fill="#6a5a48" opacity="0.55"/><rect x="322.4" y="335.1" width="1.2" height="1" fill="#7a6a58" opacity="0.55"/><rect x="523.1" y="417.4" width="1.2" height="1" fill="#5e5040" opacity="0.55"/><rect x="492.5" y="408.7" width="1.2" height="1" fill="#30281f" opacity="0.55"/><rect x="363.2" y="392.9" width="1.2" height="1" fill="#2e261e" opacity="0.55"/><rect x="500.3" y="422.1" width="1.2" height="1" fill="#2e261e" opacity="0.55"/><rect x="476.5" y="397.3" width="1.2" height="1" fill="#30281f" opacity="0.55"/><rect x="335.6" y="352.9" width="1.2" height="1" fill="#30281f" opacity="0.55"/><rect x="340.6" y="301.7" width="1.2" height="1" fill="#6a5a48" opacity="0.55"/><rect x="414.8" y="305.5" width="1.2" height="1" fill="#5e5040" opacity="0.55"/><rect x="781.6" y="380.9" width="1.2" height="1" fill="#7a6a58" opacity="0.55"/><rect x="680.0" y="390.8" width="1.2" height="1" fill="#7a6a58" opacity="0.55"/><rect x="464.1" y="395.1" width="1.2" height="1" fill="#5e5040" opacity="0.55"/><rect x="761.8" y="383.2" width="1.2" height="1" fill="#6a5a48" opacity="0.55"/><rect x="332.7" y="328.8" width="1.2" height="1" fill="#30281f" opacity="0.55"/><rect x="665.2" y="360.3" width="1.2" height="1" fill="#30281f" opacity="0.55"/><rect x="700.9" y="421.2" width="1.2" height="1" fill="#30281f" opacity="0.55"/><rect x="384.8" y="364.5" width="1.2" height="1" fill="#6a5a48" opacity="0.55"/><rect x="707.0" y="397.4" width="1.2" height="1" fill="#2e261e" opacity="0.55"/><rect x="474.7" y="346.2" width="1.2" height="1" fill="#5e5040" opacity="0.55"/><rect x="359.0" y="323.8" width="1.2" height="1" fill="#2e261e" opacity="0.55"/><rect x="440.0" y="305.8" width="1.2" height="1" fill="#6a5a48" opacity="0.55"/><rect x="552.7" y="371.1" width="1.2" height="1" fill="#2e261e" opacity="0.55"/><rect x="792.5" y="417.2" width="1.2" height="1" fill="#6a5a48" opacity="0.55"/><rect x="448.4" y="308.4" width="1.2" height="1" fill="#6a5a48" opacity="0.55"/><rect x="523.5" y="431.4" width="1.2" height="1" fill="#30281f" opacity="0.55"/><rect x="404.3" y="315.1" width="1.2" height="1" fill="#30281f" opacity="0.55"/><rect x="619.4" y="388.7" width="1.2" height="1" fill="#5e5040" opacity="0.55"/><rect x="728.4" y="387.4" width="1.2" height="1" fill="#6a5a48" opacity="0.55"/><rect x="696.1" y="337.0" width="1.2" height="1" fill="#7a6a58" opacity="0.55"/><rect x="593.7" y="347.7" width="1.2" height="1" fill="#7a6a58" opacity="0.55"/><rect x="416.8" y="330.7" width="1.2" height="1" fill="#2e261e" opacity="0.55"/><rect x="434.3" y="335.3" width="1.2" height="1" fill="#5e5040" opacity="0.55"/><rect x="411.5" y="305.8" width="1.2" height="1" fill="#7a6a58" opacity="0.55"/><rect x="798.4" y="366.0" width="1.2" height="1" fill="#2e261e" opacity="0.55"/><rect x="323.2" y="417.1" width="1.2" height="1" fill="#2e261e" opacity="0.55"/><rect x="725.3" y="421.4" width="1.2" height="1" fill="#6a5a48" opacity="0.55"/><rect x="345.2" y="378.7" width="1.2" height="1" fill="#5e5040" opacity="0.55"/><rect x="414.4" y="307.2" width="1.2" height="1" fill="#5e5040" opacity="0.55"/><rect x="737.6" y="358.1" width="1.2" height="1" fill="#7a6a58" opacity="0.55"/><rect x="693.8" y="387.4" width="1.2" height="1" fill="#6a5a48" opacity="0.55"/><rect x="371.9" y="378.1" width="1.2" height="1" fill="#5e5040" opacity="0.55"/><rect x="673.2" y="421.3" width="1.2" height="1" fill="#6a5a48" opacity="0.55"/><rect x="714.9" y="352.6" width="1.2" height="1" fill="#7a6a58" opacity="0.55"/><rect x="410.1" y="339.5" width="1.2" height="1" fill="#2e261e" opacity="0.55"/><rect x="336.1" y="364.4" width="1.2" height="1" fill="#30281f" opacity="0.55"/><rect x="351.4" y="310.8" width="1.2" height="1" fill="#30281f" opacity="0.55"/><rect x="577.9" y="385.8" width="1.2" height="1" fill="#30281f" opacity="0.55"/><rect x="655.5" y="352.7" width="1.2" height="1" fill="#7a6a58" opacity="0.55"/><rect x="642.2" y="353.8" width="1.2" height="1" fill="#6a5a48" opacity="0.55"/><rect x="471.2" y="374.0" width="1.2" height="1" fill="#7a6a58" opacity="0.55"/><rect x="689.8" y="406.1" width="1.2" height="1" fill="#2e261e" opacity="0.55"/><rect x="508.9" y="352.1" width="1.2" height="1" fill="#6a5a48" opacity="0.55"/><rect x="375.6" y="309.3" width="1.2" height="1" fill="#5e5040" opacity="0.55"/><rect x="745.6" y="359.7" width="1.2" height="1" fill="#2e261e" opacity="0.55"/><rect x="383.5" y="304.0" width="1.2" height="1" fill="#2e261e" opacity="0.55"/><rect x="629.2" y="420.7" width="1.2" height="1" fill="#6a5a48" opacity="0.55"/><rect x="596.5" y="423.1" width="1.2" height="1" fill="#5e5040" opacity="0.55"/><rect x="403.6" y="344.3" width="1.2" height="1" fill="#2e261e" opacity="0.55"/><rect x="571.7" y="422.9" width="1.2" height="1" fill="#6a5a48" opacity="0.55"/><rect x="505.6" y="399.5" width="1.2" height="1" fill="#2e261e" opacity="0.55"/><rect x="466.1" y="410.9" width="1.2" height="1" fill="#6a5a48" opacity="0.55"/><rect x="790.2" y="362.7" width="1.2" height="1" fill="#6a5a48" opacity="0.55"/><rect x="613.3" y="383.5" width="1.2" height="1" fill="#6a5a48" opacity="0.55"/><rect x="755.9" y="381.4" width="1.2" height="1" fill="#2e261e" opacity="0.55"/><rect x="629.0" y="413.5" width="1.2" height="1" fill="#5e5040" opacity="0.55"/><rect x="515.6" y="412.1" width="1.2" height="1" fill="#30281f" opacity="0.55"/><rect x="409.0" y="326.7" width="1.2" height="1" fill="#30281f" opacity="0.55"/><rect x="787.9" y="407.9" width="1.2" height="1" fill="#2e261e" opacity="0.55"/><rect x="340.8" y="373.5" width="1.2" height="1" fill="#6a5a48" opacity="0.55"/><rect x="508.5" y="359.0" width="1.2" height="1" fill="#7a6a58" opacity="0.55"/><rect x="440.9" y="349.9" width="1.2" height="1" fill="#7a6a58" opacity="0.55"/><rect x="535.9" y="356.6" width="1.2" height="1" fill="#6a5a48" opacity="0.55"/><rect x="322.7" y="431.1" width="1.2" height="1" fill="#30281f" opacity="0.55"/><rect x="434.2" y="400.8" width="1.2" height="1" fill="#30281f" opacity="0.55"/><rect x="723.4" y="407.2" width="1.2" height="1" fill="#30281f" opacity="0.55"/><rect x="372.5" y="314.5" width="1.2" height="1" fill="#30281f" opacity="0.55"/><rect x="496.7" y="406.1" width="1.2" height="1" fill="#5e5040" opacity="0.55"/><rect x="673.8" y="402.8" width="1.2" height="1" fill="#5e5040" opacity="0.55"/><rect x="359.5" y="399.3" width="1.2" height="1" fill="#30281f" opacity="0.55"/><rect x="635.0" y="403.7" width="1.2" height="1" fill="#6a5a48" opacity="0.55"/><rect x="733.3" y="432.5" width="1.2" height="1" fill="#6a5a48" opacity="0.55"/><rect x="414.2" y="430.5" width="1.2" height="1" fill="#30281f" opacity="0.55"/><rect x="459.5" y="407.3" width="1.2" height="1" fill="#2e261e" opacity="0.55"/><rect x="651.0" y="395.1" width="1.2" height="1" fill="#2e261e" opacity="0.55"/><rect x="352.5" y="344.7" width="1.2" height="1" fill="#7a6a58" opacity="0.55"/><rect x="397.4" y="418.9" width="1.2" height="1" fill="#7a6a58" opacity="0.55"/><rect x="756.3" y="359.1" width="1.2" height="1" fill="#7a6a58" opacity="0.55"/><rect x="562.6" y="422.1" width="1.2" height="1" fill="#2e261e" opacity="0.55"/><rect x="605.7" y="380.8" width="1.2" height="1" fill="#2e261e" opacity="0.55"/><rect x="408.6" y="318.9" width="1.2" height="1" fill="#7a6a58" opacity="0.55"/><rect x="647.9" y="418.8" width="1.2" height="1" fill="#2e261e" opacity="0.55"/><rect x="733.8" y="428.4" width="1.2" height="1" fill="#30281f" opacity="0.55"/><rect x="588.0" y="375.9" width="1.2" height="1" fill="#6a5a48" opacity="0.55"/><rect x="442.2" y="369.9" width="1.2" height="1" fill="#30281f" opacity="0.55"/><rect x="675.9" y="347.5" width="1.2" height="1" fill="#30281f" opacity="0.55"/><rect x="797.4" y="375.5" width="1.2" height="1" fill="#7a6a58" opacity="0.55"/><rect x="431.7" y="380.7" width="1.2" height="1" fill="#6a5a48" opacity="0.55"/><rect x="463.6" y="367.2" width="1.2" height="1" fill="#7a6a58" opacity="0.55"/><rect x="628.5" y="430.8" width="1.2" height="1" fill="#5e5040" opacity="0.55"/><rect x="767.6" y="418.8" width="1.2" height="1" fill="#6a5a48" opacity="0.55"/><rect x="461.0" y="382.1" width="1.2" height="1" fill="#30281f" opacity="0.55"/><rect x="567.6" y="418.8" width="1.2" height="1" fill="#2e261e" opacity="0.55"/><rect x="555.9" y="380.3" width="1.2" height="1" fill="#6a5a48" opacity="0.55"/><rect x="601.7" y="377.1" width="1.2" height="1" fill="#2e261e" opacity="0.55"/><rect x="497.2" y="409.7" width="1.2" height="1" fill="#2e261e" opacity="0.55"/><rect x="385.8" y="424.4" width="1.2" height="1" fill="#2e261e" opacity="0.55"/><rect x="661.3" y="358.3" width="1.2" height="1" fill="#6a5a48" opacity="0.55"/><rect x="628.0" y="415.5" width="1.2" height="1" fill="#7a6a58" opacity="0.55"/><rect x="326.5" y="384.7" width="1.2" height="1" fill="#5e5040" opacity="0.55"/><rect x="750.4" y="377.9" width="1.2" height="1" fill="#5e5040" opacity="0.55"/><rect x="534.4" y="424.5" width="1.2" height="1" fill="#30281f" opacity="0.55"/><rect x="440.5" y="419.9" width="1.2" height="1" fill="#6a5a48" opacity="0.55"/><rect x="350.6" y="300.4" width="1.2" height="1" fill="#2e261e" opacity="0.55"/><rect x="435.3" y="304.9" width="1.2" height="1" fill="#6a5a48" opacity="0.55"/><rect x="326.9" y="371.9" width="1.2" height="1" fill="#2e261e" opacity="0.55"/><rect x="389.4" y="324.1" width="1.2" height="1" fill="#5e5040" opacity="0.55"/><rect x="630.1" y="385.1" width="1.2" height="1" fill="#30281f" opacity="0.55"/><rect x="344.3" y="418.0" width="1.2" height="1" fill="#30281f" opacity="0.55"/><rect x="727.2" y="398.3" width="1.2" height="1" fill="#30281f" opacity="0.55"/><rect x="359.7" y="386.2" width="1.2" height="1" fill="#2e261e" opacity="0.55"/><rect x="429.7" y="311.3" width="1.2" height="1" fill="#2e261e" opacity="0.55"/><rect x="749.7" y="422.8" width="1.2" height="1" fill="#7a6a58" opacity="0.55"/><rect x="587.4" y="356.3" width="1.2" height="1" fill="#5e5040" opacity="0.55"/><rect x="788.5" y="337.2" width="1.2" height="1" fill="#2e261e" opacity="0.55"/><rect x="362.1" y="366.0" width="1.2" height="1" fill="#2e261e" opacity="0.55"/><rect x="446.2" y="329.1" width="1.2" height="1" fill="#2e261e" opacity="0.55"/><rect x="775.4" y="398.5" width="1.2" height="1" fill="#7a6a58" opacity="0.55"/><rect x="413.3" y="349.9" width="1.2" height="1" fill="#5e5040" opacity="0.55"/><rect x="436.0" y="420.4" width="1.2" height="1" fill="#5e5040" opacity="0.55"/><rect x="546.8" y="411.2" width="1.2" height="1" fill="#6a5a48" opacity="0.55"/><rect x="733.5" y="356.5" width="1.2" height="1" fill="#2e261e" opacity="0.55"/><rect x="423.0" y="381.7" width="1.2" height="1" fill="#6a5a48" opacity="0.55"/><rect x="336.8" y="312.2" width="1.2" height="1" fill="#5e5040" opacity="0.55"/><rect x="767.8" y="343.9" width="1.2" height="1" fill="#2e261e" opacity="0.55"/><rect x="387.6" y="384.5" width="1.2" height="1" fill="#6a5a48" opacity="0.55"/><rect x="656.3" y="397.2" width="1.2" height="1" fill="#6a5a48" opacity="0.55"/><rect x="733.0" y="400.6" width="1.2" height="1" fill="#2e261e" opacity="0.55"/><rect x="714.2" y="408.5" width="1.2" height="1" fill="#6a5a48" opacity="0.55"/><rect x="744.1" y="399.8" width="1.2" height="1" fill="#30281f" opacity="0.55"/><rect x="372.5" y="325.0" width="1.2" height="1" fill="#6a5a48" opacity="0.55"/><rect x="337.3" y="426.1" width="1.2" height="1" fill="#6a5a48" opacity="0.55"/><rect x="717.9" y="382.9" width="1.2" height="1" fill="#7a6a58" opacity="0.55"/><rect x="701.9" y="384.9" width="1.2" height="1" fill="#7a6a58" opacity="0.55"/><rect x="474.5" y="354.6" width="1.2" height="1" fill="#6a5a48" opacity="0.55"/><rect x="489.8" y="423.5" width="1.2" height="1" fill="#6a5a48" opacity="0.55"/><rect x="665.3" y="347.1" width="1.2" height="1" fill="#7a6a58" opacity="0.55"/><rect x="691.0" y="378.9" width="1.2" height="1" fill="#30281f" opacity="0.55"/><rect x="730.5" y="381.1" width="1.2" height="1" fill="#6a5a48" opacity="0.55"/><rect x="593.3" y="394.2" width="1.2" height="1" fill="#6a5a48" opacity="0.55"/><rect x="530.7" y="368.2" width="1.2" height="1" fill="#7a6a58" opacity="0.55"/><rect x="687.6" y="430.0" width="1.2" height="1" fill="#6a5a48" opacity="0.55"/><rect x="655.4" y="409.2" width="1.2" height="1" fill="#30281f" opacity="0.55"/><rect x="606.0" y="427.2" width="1.2" height="1" fill="#5e5040" opacity="0.55"/><rect x="446.3" y="425.4" width="1.2" height="1" fill="#7a6a58" opacity="0.55"/><rect x="713.1" y="424.6" width="1.2" height="1" fill="#2e261e" opacity="0.55"/><rect x="700.0" y="391.8" width="1.2" height="1" fill="#6a5a48" opacity="0.55"/><rect x="623.0" y="345.4" width="1.2" height="1" fill="#30281f" opacity="0.55"/><rect x="767.6" y="418.3" width="1.2" height="1" fill="#6a5a48" opacity="0.55"/><rect x="524.0" y="384.8" width="1.2" height="1" fill="#7a6a58" opacity="0.55"/><rect x="420.1" y="332.8" width="1.2" height="1" fill="#5e5040" opacity="0.55"/><rect x="562.1" y="348.6" width="1.2" height="1" fill="#2e261e" opacity="0.55"/><rect x="606.8" y="390.7" width="1.2" height="1" fill="#5e5040" opacity="0.55"/><rect x="631.9" y="344.4" width="1.2" height="1" fill="#7a6a58" opacity="0.55"/><rect x="572.0" y="415.0" width="1.2" height="1" fill="#30281f" opacity="0.55"/><rect x="639.5" y="397.9" width="1.2" height="1" fill="#2e261e" opacity="0.55"/><rect x="543.8" y="390.7" width="1.2" height="1" fill="#7a6a58" opacity="0.55"/><rect x="543.2" y="417.4" width="1.2" height="1" fill="#2e261e" opacity="0.55"/><rect x="684.0" y="409.4" width="1.2" height="1" fill="#5e5040" opacity="0.55"/><rect x="395.4" y="318.2" width="1.2" height="1" fill="#2e261e" opacity="0.55"/><rect x="668.8" y="379.0" width="1.2" height="1" fill="#7a6a58" opacity="0.55"/><rect x="398.4" y="341.6" width="1.2" height="1" fill="#2e261e" opacity="0.55"/><rect x="445.4" y="426.9" width="1.2" height="1" fill="#6a5a48" opacity="0.55"/><rect x="400.2" y="386.5" width="1.2" height="1" fill="#2e261e" opacity="0.55"/><rect x="505.8" y="430.8" width="1.2" height="1" fill="#7a6a58" opacity="0.55"/><rect x="673.7" y="356.1" width="1.2" height="1" fill="#2e261e" opacity="0.55"/><rect x="373.6" y="421.0" width="1.2" height="1" fill="#7a6a58" opacity="0.55"/><rect x="420.3" y="349.8" width="1.2" height="1" fill="#6a5a48" opacity="0.55"/><rect x="327.1" y="413.2" width="1.2" height="1" fill="#30281f" opacity="0.55"/><rect x="654.5" y="365.1" width="1.2" height="1" fill="#7a6a58" opacity="0.55"/><rect x="611.4" y="352.0" width="1.2" height="1" fill="#2e261e" opacity="0.55"/><rect x="757.7" y="355.5" width="1.2" height="1" fill="#5e5040" opacity="0.55"/><rect x="603.6" y="385.0" width="1.2" height="1" fill="#2e261e" opacity="0.55"/><rect x="642.3" y="385.7" width="1.2" height="1" fill="#5e5040" opacity="0.55"/><rect x="731.0" y="389.4" width="1.2" height="1" fill="#6a5a48" opacity="0.55"/><rect x="522.8" y="403.4" width="1.2" height="1" fill="#2e261e" opacity="0.55"/><rect x="441.3" y="354.6" width="1.2" height="1" fill="#30281f" opacity="0.55"/><rect x="330.5" y="413.8" width="1.2" height="1" fill="#5e5040" opacity="0.55"/><rect x="645.8" y="423.5" width="1.2" height="1" fill="#2e261e" opacity="0.55"/><rect x="751.3" y="341.6" width="1.2" height="1" fill="#6a5a48" opacity="0.55"/><rect x="508.0" y="363.6" width="1.2" height="1" fill="#6a5a48" opacity="0.55"/><rect x="339.3" y="370.9" width="1.2" height="1" fill="#2e261e" opacity="0.55"/><rect x="665.5" y="426.4" width="1.2" height="1" fill="#2e261e" opacity="0.55"/><rect x="597.4" y="370.6" width="1.2" height="1" fill="#30281f" opacity="0.55"/><rect x="567.4" y="383.9" width="1.2" height="1" fill="#7a6a58" opacity="0.55"/><rect x="571.9" y="352.8" width="1.2" height="1" fill="#30281f" opacity="0.55"/><rect x="422.1" y="390.1" width="1.2" height="1" fill="#30281f" opacity="0.55"/><rect x="568.1" y="423.8" width="1.2" height="1" fill="#5e5040" opacity="0.55"/><rect x="453.0" y="351.4" width="1.2" height="1" fill="#6a5a48" opacity="0.55"/><rect x="357.2" y="421.5" width="1.2" height="1" fill="#7a6a58" opacity="0.55"/><rect x="467.0" y="351.5" width="1.2" height="1" fill="#5e5040" opacity="0.55"/><rect x="788.3" y="432.2" width="1.2" height="1" fill="#30281f" opacity="0.55"/><rect x="629.9" y="395.0" width="1.2" height="1" fill="#2e261e" opacity="0.55"/><rect x="490.9" y="383.9" width="1.2" height="1" fill="#30281f" opacity="0.55"/><rect x="722.0" y="345.2" width="1.2" height="1" fill="#2e261e" opacity="0.55"/><rect x="449.6" y="348.2" width="1.2" height="1" fill="#7a6a58" opacity="0.55"/><rect x="793.8" y="389.3" width="1.2" height="1" fill="#30281f" opacity="0.55"/><rect x="322.3" y="395.2" width="1.2" height="1" fill="#7a6a58" opacity="0.55"/><rect x="493.2" y="386.0" width="1.2" height="1" fill="#7a6a58" opacity="0.55"/><rect x="551.7" y="355.3" width="1.2" height="1" fill="#6a5a48" opacity="0.55"/><rect x="638.1" y="346.3" width="1.2" height="1" fill="#7a6a58" opacity="0.55"/><rect x="719.2" y="420.2" width="1.2" height="1" fill="#2e261e" opacity="0.55"/><rect x="576.2" y="343.9" width="1.2" height="1" fill="#5e5040" opacity="0.55"/><rect x="778.8" y="386.2" width="1.2" height="1" fill="#7a6a58" opacity="0.55"/><rect x="613.5" y="375.7" width="1.2" height="1" fill="#2e261e" opacity="0.55"/><rect x="410.3" y="358.5" width="1.2" height="1" fill="#2e261e" opacity="0.55"/><rect x="421.3" y="351.7" width="1.2" height="1" fill="#5e5040" opacity="0.55"/><rect x="401.8" y="418.2" width="1.2" height="1" fill="#5e5040" opacity="0.55"/><rect x="754.7" y="371.6" width="1.2" height="1" fill="#7a6a58" opacity="0.55"/><rect x="415.9" y="391.2" width="1.2" height="1" fill="#5e5040" opacity="0.55"/><rect x="358.8" y="411.1" width="1.2" height="1" fill="#6a5a48" opacity="0.55"/><rect x="433.6" y="316.0" width="1.2" height="1" fill="#30281f" opacity="0.55"/><rect x="589.0" y="362.9" width="1.2" height="1" fill="#2e261e" opacity="0.55"/><rect x="400.2" y="378.5" width="1.2" height="1" fill="#6a5a48" opacity="0.55"/><rect x="398.1" y="340.6" width="1.2" height="1" fill="#5e5040" opacity="0.55"/><rect x="545.0" y="354.9" width="1.2" height="1" fill="#6a5a48" opacity="0.55"/><rect x="407.8" y="346.0" width="1.2" height="1" fill="#6a5a48" opacity="0.55"/><rect x="330.9" y="303.2" width="1.2" height="1" fill="#7a6a58" opacity="0.55"/><rect x="553.9" y="400.0" width="1.2" height="1" fill="#2e261e" opacity="0.55"/><rect x="337.3" y="394.7" width="1.2" height="1" fill="#2e261e" opacity="0.55"/><rect x="483.9" y="414.2" width="1.2" height="1" fill="#7a6a58" opacity="0.55"/><rect x="485.2" y="402.9" width="1.2" height="1" fill="#5e5040" opacity="0.55"/><rect x="530.3" y="354.4" width="1.2" height="1" fill="#5e5040" opacity="0.55"/><rect x="346.4" y="336.3" width="1.2" height="1" fill="#7a6a58" opacity="0.55"/><rect x="719.1" y="351.9" width="1.2" height="1" fill="#5e5040" opacity="0.55"/><rect x="794.4" y="415.7" width="1.2" height="1" fill="#7a6a58" opacity="0.55"/><rect x="790.0" y="386.0" width="1.2" height="1" fill="#6a5a48" opacity="0.55"/><rect x="464.9" y="376.8" width="1.2" height="1" fill="#6a5a48" opacity="0.55"/><rect x="668.6" y="417.4" width="1.2" height="1" fill="#5e5040" opacity="0.55"/><rect x="597.1" y="351.2" width="1.2" height="1" fill="#6a5a48" opacity="0.55"/><rect x="324.0" y="322.8" width="1.2" height="1" fill="#30281f" opacity="0.55"/><rect x="613.8" y="386.5" width="1.2" height="1" fill="#5e5040" opacity="0.55"/><rect x="758.6" y="380.2" width="1.2" height="1" fill="#5e5040" opacity="0.55"/><rect x="391.7" y="388.6" width="1.2" height="1" fill="#5e5040" opacity="0.55"/><rect x="340.0" y="383.2" width="1.2" height="1" fill="#2e261e" opacity="0.55"/><rect x="369.8" y="321.7" width="1.2" height="1" fill="#6a5a48" opacity="0.55"/><rect x="469.8" y="393.6" width="1.2" height="1" fill="#7a6a58" opacity="0.55"/><rect x="409.9" y="301.7" width="1.2" height="1" fill="#6a5a48" opacity="0.55"/><rect x="528.2" y="384.3" width="1.2" height="1" fill="#6a5a48" opacity="0.55"/><rect x="560.4" y="368.0" width="1.2" height="1" fill="#6a5a48" opacity="0.55"/><rect x="693.2" y="354.3" width="1.2" height="1" fill="#30281f" opacity="0.55"/><rect x="507.2" y="377.5" width="1.2" height="1" fill="#2e261e" opacity="0.55"/><rect x="549.7" y="353.1" width="1.2" height="1" fill="#6a5a48" opacity="0.55"/><rect x="360.9" y="361.2" width="1.2" height="1" fill="#2e261e" opacity="0.55"/><rect x="622.5" y="355.1" width="1.2" height="1" fill="#6a5a48" opacity="0.55"/><rect x="329.6" y="394.8" width="1.2" height="1" fill="#2e261e" opacity="0.55"/><rect x="537.8" y="398.2" width="1.2" height="1" fill="#6a5a48" opacity="0.55"/><rect x="497.0" y="398.6" width="1.2" height="1" fill="#2e261e" opacity="0.55"/><rect x="623.4" y="393.5" width="1.2" height="1" fill="#30281f" opacity="0.55"/><rect x="643.0" y="418.0" width="1.2" height="1" fill="#6a5a48" opacity="0.55"/><rect x="328.1" y="385.5" width="1.2" height="1" fill="#5e5040" opacity="0.55"/><rect x="359.3" y="339.3" width="1.2" height="1" fill="#5e5040" opacity="0.55"/><rect x="400.8" y="414.1" width="1.2" height="1" fill="#30281f" opacity="0.55"/><rect x="777.4" y="396.0" width="1.2" height="1" fill="#30281f" opacity="0.55"/><rect x="704.5" y="346.4" width="1.2" height="1" fill="#2e261e" opacity="0.55"/><rect x="623.9" y="353.8" width="1.2" height="1" fill="#30281f" opacity="0.55"/><rect x="695.3" y="358.6" width="1.2" height="1" fill="#7a6a58" opacity="0.55"/><rect x="698.4" y="374.1" width="1.2" height="1" fill="#7a6a58" opacity="0.55"/><rect x="455.6" y="381.6" width="1.2" height="1" fill="#5e5040" opacity="0.55"/><rect x="480.7" y="379.4" width="1.2" height="1" fill="#6a5a48" opacity="0.55"/><rect x="720.8" y="378.8" width="1.2" height="1" fill="#7a6a58" opacity="0.55"/><rect x="602.2" y="429.8" width="1.2" height="1" fill="#2e261e" opacity="0.55"/><rect x="502.2" y="390.1" width="1.2" height="1" fill="#5e5040" opacity="0.55"/><rect x="538.1" y="390.6" width="1.2" height="1" fill="#7a6a58" opacity="0.55"/><rect x="447.5" y="354.5" width="1.2" height="1" fill="#5e5040" opacity="0.55"/><rect x="763.8" y="400.8" width="1.2" height="1" fill="#6a5a48" opacity="0.55"/><rect x="749.4" y="432.0" width="1.2" height="1" fill="#2e261e" opacity="0.55"/><rect x="452.7" y="412.8" width="1.2" height="1" fill="#5e5040" opacity="0.55"/><rect x="650.3" y="421.3" width="1.2" height="1" fill="#7a6a58" opacity="0.55"/><rect x="578.1" y="370.4" width="1.2" height="1" fill="#30281f" opacity="0.55"/><rect x="681.8" y="423.7" width="1.2" height="1" fill="#2e261e" opacity="0.55"/><rect x="511.2" y="393.3" width="1.2" height="1" fill="#7a6a58" opacity="0.55"/><rect x="506.2" y="370.5" width="1.2" height="1" fill="#5e5040" opacity="0.55"/><rect x="709.0" y="402.0" width="1.2" height="1" fill="#2e261e" opacity="0.55"/><rect x="512.5" y="367.9" width="1.2" height="1" fill="#7a6a58" opacity="0.55"/><rect x="746.7" y="368.0" width="1.2" height="1" fill="#30281f" opacity="0.55"/><rect x="423.3" y="309.5" width="1.2" height="1" fill="#7a6a58" opacity="0.55"/><rect x="495.5" y="373.8" width="1.2" height="1" fill="#30281f" opacity="0.55"/><rect x="696.0" y="413.5" width="1.2" height="1" fill="#2e261e" opacity="0.55"/><rect x="342.4" y="432.6" width="1.2" height="1" fill="#7a6a58" opacity="0.55"/><rect x="737.7" y="347.5" width="1.2" height="1" fill="#30281f" opacity="0.55"/><rect x="608.3" y="343.9" width="1.2" height="1" fill="#5e5040" opacity="0.55"/><rect x="419.4" y="415.4" width="1.2" height="1" fill="#5e5040" opacity="0.55"/><rect x="554.9" y="374.1" width="1.2" height="1" fill="#7a6a58" opacity="0.55"/><rect x="766.2" y="335.1" width="1.2" height="1" fill="#6a5a48" opacity="0.55"/><rect x="776.3" y="401.3" width="1.2" height="1" fill="#5e5040" opacity="0.55"/><rect x="339.2" y="324.3" width="1.2" height="1" fill="#2e261e" opacity="0.55"/><rect x="337.7" y="347.3" width="1.2" height="1" fill="#30281f" opacity="0.55"/><rect x="555.2" y="412.0" width="1.2" height="1" fill="#6a5a48" opacity="0.55"/><rect x="736.1" y="384.0" width="1.2" height="1" fill="#6a5a48" opacity="0.55"/><rect x="364.2" y="422.2" width="1.2" height="1" fill="#5e5040" opacity="0.55"/><rect x="510.1" y="358.0" width="1.2" height="1" fill="#2e261e" opacity="0.55"/><rect x="774.0" y="425.0" width="1.2" height="1" fill="#6a5a48" opacity="0.55"/><rect x="755.2" y="420.0" width="1.2" height="1" fill="#6a5a48" opacity="0.55"/><rect x="445.1" y="366.8" width="1.2" height="1" fill="#30281f" opacity="0.55"/><rect x="347.8" y="316.7" width="1.2" height="1" fill="#6a5a48" opacity="0.55"/><rect x="772.8" y="389.1" width="1.2" height="1" fill="#7a6a58" opacity="0.55"/><rect x="604.7" y="357.0" width="1.2" height="1" fill="#6a5a48" opacity="0.55"/><rect x="547.4" y="347.5" width="1.2" height="1" fill="#30281f" opacity="0.55"/><rect x="380.7" y="362.5" width="1.2" height="1" fill="#2e261e" opacity="0.55"/><rect x="533.3" y="406.8" width="1.2" height="1" fill="#6a5a48" opacity="0.55"/><rect x="546.1" y="421.1" width="1.2" height="1" fill="#6a5a48" opacity="0.55"/><rect x="396.5" y="410.3" width="1.2" height="1" fill="#6a5a48" opacity="0.55"/><rect x="770.2" y="414.9" width="1.2" height="1" fill="#2e261e" opacity="0.55"/><rect x="695.4" y="427.3" width="1.2" height="1" fill="#30281f" opacity="0.55"/><rect x="726.1" y="382.5" width="1.2" height="1" fill="#30281f" opacity="0.55"/><rect x="788.7" y="340.9" width="1.2" height="1" fill="#2e261e" opacity="0.55"/><rect x="550.7" y="382.4" width="1.2" height="1" fill="#2e261e" opacity="0.55"/><rect x="480.7" y="397.1" width="1.2" height="1" fill="#2e261e" opacity="0.55"/><rect x="664.3" y="372.3" width="1.2" height="1" fill="#2e261e" opacity="0.55"/><rect x="333.2" y="374.7" width="1.2" height="1" fill="#7a6a58" opacity="0.55"/><rect x="751.5" y="387.9" width="1.2" height="1" fill="#2e261e" opacity="0.55"/><rect x="590.3" y="410.6" width="1.2" height="1" fill="#6a5a48" opacity="0.55"/><rect x="445.0" y="324.4" width="1.2" height="1" fill="#7a6a58" opacity="0.55"/><rect x="435.8" y="329.4" width="1.2" height="1" fill="#30281f" opacity="0.55"/><rect x="460.2" y="418.9" width="1.2" height="1" fill="#6a5a48" opacity="0.55"/><rect x="721.3" y="430.1" width="1.2" height="1" fill="#2e261e" opacity="0.55"/><rect x="709.2" y="343.4" width="1.2" height="1" fill="#2e261e" opacity="0.55"/><rect x="534.1" y="404.4" width="1.2" height="1" fill="#5e5040" opacity="0.55"/><rect x="458.8" y="346.0" width="1.2" height="1" fill="#6a5a48" opacity="0.55"/><rect x="407.6" y="401.8" width="1.2" height="1" fill="#2e261e" opacity="0.55"/><rect x="415.6" y="307.8" width="1.2" height="1" fill="#6a5a48" opacity="0.55"/><rect x="748.8" y="396.4" width="1.2" height="1" fill="#7a6a58" opacity="0.55"/><rect x="405.3" y="315.6" width="1.2" height="1" fill="#2e261e" opacity="0.55"/><rect x="352.6" y="396.6" width="1.2" height="1" fill="#30281f" opacity="0.55"/><rect x="725.6" y="421.6" width="1.2" height="1" fill="#5e5040" opacity="0.55"/><rect x="710.9" y="342.6" width="1.2" height="1" fill="#30281f" opacity="0.55"/><rect x="364.4" y="352.7" width="1.2" height="1" fill="#30281f" opacity="0.55"/><rect x="385.1" y="387.5" width="1.2" height="1" fill="#2e261e" opacity="0.55"/><rect x="410.5" y="410.1" width="1.2" height="1" fill="#7a6a58" opacity="0.55"/><rect x="338.6" y="392.5" width="1.2" height="1" fill="#5e5040" opacity="0.55"/><rect x="571.0" y="357.6" width="1.2" height="1" fill="#5e5040" opacity="0.55"/><rect x="355.3" y="345.5" width="1.2" height="1" fill="#2e261e" opacity="0.55"/><rect x="713.8" y="414.7" width="1.2" height="1" fill="#7a6a58" opacity="0.55"/><rect x="695.8" y="415.1" width="1.2" height="1" fill="#5e5040" opacity="0.55"/><rect x="740.8" y="426.8" width="1.2" height="1" fill="#30281f" opacity="0.55"/><rect x="438.1" y="309.0" width="1.2" height="1" fill="#5e5040" opacity="0.55"/><rect x="408.7" y="311.0" width="1.2" height="1" fill="#7a6a58" opacity="0.55"/><rect x="588.1" y="426.9" width="1.2" height="1" fill="#6a5a48" opacity="0.55"/><rect x="367.4" y="392.1" width="1.2" height="1" fill="#2e261e" opacity="0.55"/><rect x="446.7" y="410.9" width="1.2" height="1" fill="#5e5040" opacity="0.55"/><rect x="534.7" y="344.7" width="1.2" height="1" fill="#6a5a48" opacity="0.55"/><rect x="380.2" y="364.1" width="1.2" height="1" fill="#5e5040" opacity="0.55"/><rect x="379.5" y="417.3" width="1.2" height="1" fill="#5e5040" opacity="0.55"/><rect x="605.7" y="414.1" width="1.2" height="1" fill="#2e261e" opacity="0.55"/><rect x="642.7" y="359.8" width="1.2" height="1" fill="#30281f" opacity="0.55"/><rect x="400.0" y="409.3" width="1.2" height="1" fill="#30281f" opacity="0.55"/><rect x="654.8" y="378.2" width="1.2" height="1" fill="#5e5040" opacity="0.55"/><rect x="573.8" y="350.8" width="1.2" height="1" fill="#6a5a48" opacity="0.55"/><rect x="694.7" y="343.0" width="1.2" height="1" fill="#2e261e" opacity="0.55"/><rect x="724.4" y="394.3" width="1.2" height="1" fill="#5e5040" opacity="0.55"/><rect x="707.9" y="421.1" width="1.2" height="1" fill="#30281f" opacity="0.55"/><rect x="569.9" y="427.3" width="1.2" height="1" fill="#7a6a58" opacity="0.55"/><rect x="440.9" y="354.4" width="1.2" height="1" fill="#6a5a48" opacity="0.55"/><rect x="496.3" y="369.2" width="1.2" height="1" fill="#6a5a48" opacity="0.55"/><rect x="523.4" y="351.0" width="1.2" height="1" fill="#30281f" opacity="0.55"/><rect x="625.6" y="407.1" width="1.2" height="1" fill="#6a5a48" opacity="0.55"/><rect x="337.5" y="384.3" width="1.2" height="1" fill="#7a6a58" opacity="0.55"/><rect x="762.5" y="381.8" width="1.2" height="1" fill="#5e5040" opacity="0.55"/><rect x="369.3" y="313.6" width="1.2" height="1" fill="#6a5a48" opacity="0.55"/><rect x="529.6" y="426.3" width="1.2" height="1" fill="#7a6a58" opacity="0.55"/><rect x="375.4" y="344.3" width="1.2" height="1" fill="#2e261e" opacity="0.55"/><rect x="378.9" y="377.8" width="1.2" height="1" fill="#5e5040" opacity="0.55"/><rect x="604.9" y="423.7" width="1.2" height="1" fill="#30281f" opacity="0.55"/><rect x="380.6" y="314.9" width="1.2" height="1" fill="#7a6a58" opacity="0.55"/><rect x="761.4" y="375.5" width="1.2" height="1" fill="#7a6a58" opacity="0.55"/><rect x="438.1" y="308.9" width="1.2" height="1" fill="#5e5040" opacity="0.55"/><rect x="459.1" y="358.8" width="1.2" height="1" fill="#5e5040" opacity="0.55"/><rect x="427.6" y="349.6" width="1.2" height="1" fill="#5e5040" opacity="0.55"/><rect x="662.7" y="359.7" width="1.2" height="1" fill="#5e5040" opacity="0.55"/><rect x="467.1" y="362.0" width="1.2" height="1" fill="#7a6a58" opacity="0.55"/><rect x="335.9" y="342.4" width="1.2" height="1" fill="#2e261e" opacity="0.55"/><rect x="567.5" y="349.1" width="1.2" height="1" fill="#5e5040" opacity="0.55"/><rect x="511.7" y="422.7" width="1.2" height="1" fill="#2e261e" opacity="0.55"/><rect x="588.8" y="363.8" width="1.2" height="1" fill="#7a6a58" opacity="0.55"/><rect x="348.4" y="300.0" width="1.2" height="1" fill="#5e5040" opacity="0.55"/><rect x="353.1" y="415.5" width="1.2" height="1" fill="#30281f" opacity="0.55"/><rect x="637.4" y="367.3" width="1.2" height="1" fill="#30281f" opacity="0.55"/><rect x="491.3" y="400.7" width="1.2" height="1" fill="#5e5040" opacity="0.55"/><rect x="429.3" y="427.5" width="1.2" height="1" fill="#2e261e" opacity="0.55"/><rect x="521.5" y="387.9" width="1.2" height="1" fill="#2e261e" opacity="0.55"/><rect x="645.8" y="380.8" width="1.2" height="1" fill="#7a6a58" opacity="0.55"/><rect x="716.0" y="367.4" width="1.2" height="1" fill="#30281f" opacity="0.55"/><rect x="450.2" y="382.8" width="1.2" height="1" fill="#2e261e" opacity="0.55"/><rect x="518.4" y="371.8" width="1.2" height="1" fill="#6a5a48" opacity="0.55"/><rect x="560.5" y="427.9" width="1.2" height="1" fill="#5e5040" opacity="0.55"/><rect x="393.0" y="412.6" width="1.2" height="1" fill="#7a6a58" opacity="0.55"/><rect x="740.8" y="379.6" width="1.2" height="1" fill="#30281f" opacity="0.55"/><rect x="730.7" y="391.2" width="1.2" height="1" fill="#7a6a58" opacity="0.55"/><rect x="508.9" y="372.5" width="1.2" height="1" fill="#30281f" opacity="0.55"/><rect x="679.7" y="431.6" width="1.2" height="1" fill="#30281f" opacity="0.55"/><rect x="597.8" y="376.1" width="1.2" height="1" fill="#6a5a48" opacity="0.55"/><rect x="716.2" y="341.9" width="1.2" height="1" fill="#5e5040" opacity="0.55"/><rect x="724.2" y="427.4" width="1.2" height="1" fill="#2e261e" opacity="0.55"/><rect x="788.6" y="418.2" width="1.2" height="1" fill="#6a5a48" opacity="0.55"/><rect x="333.3" y="331.9" width="1.2" height="1" fill="#30281f" opacity="0.55"/><rect x="465.2" y="370.0" width="1.2" height="1" fill="#7a6a58" opacity="0.55"/><rect x="580.0" y="432.8" width="1.2" height="1" fill="#5e5040" opacity="0.55"/><rect x="718.2" y="395.9" width="1.2" height="1" fill="#30281f" opacity="0.55"/><rect x="508.4" y="345.6" width="1.2" height="1" fill="#5e5040" opacity="0.55"/><rect x="646.3" y="358.6" width="1.2" height="1" fill="#6a5a48" opacity="0.55"/><rect x="646.4" y="368.4" width="1.2" height="1" fill="#6a5a48" opacity="0.55"/><rect x="518.0" y="365.1" width="1.2" height="1" fill="#5e5040" opacity="0.55"/><rect x="411.5" y="354.3" width="1.2" height="1" fill="#30281f" opacity="0.55"/><rect x="532.7" y="381.9" width="1.2" height="1" fill="#5e5040" opacity="0.55"/><rect x="486.1" y="369.1" width="1.2" height="1" fill="#6a5a48" opacity="0.55"/><rect x="403.1" y="340.3" width="1.2" height="1" fill="#6a5a48" opacity="0.55"/><rect x="718.3" y="366.7" width="1.2" height="1" fill="#6a5a48" opacity="0.55"/><rect x="486.2" y="424.2" width="1.2" height="1" fill="#5e5040" opacity="0.55"/><rect x="748.2" y="354.2" width="1.2" height="1" fill="#2e261e" opacity="0.55"/><rect x="573.1" y="408.0" width="1.2" height="1" fill="#2e261e" opacity="0.55"/><rect x="408.7" y="382.7" width="1.2" height="1" fill="#5e5040" opacity="0.55"/><rect x="372.3" y="374.5" width="1.2" height="1" fill="#6a5a48" opacity="0.55"/><rect x="322.3" y="393.6" width="1.2" height="1" fill="#5e5040" opacity="0.55"/><rect x="322.9" y="338.4" width="1.2" height="1" fill="#6a5a48" opacity="0.55"/><rect x="603.0" y="387.9" width="1.2" height="1" fill="#2e261e" opacity="0.55"/><rect x="405.3" y="401.6" width="1.2" height="1" fill="#5e5040" opacity="0.55"/><rect x="449.0" y="385.0" width="1.2" height="1" fill="#5e5040" opacity="0.55"/><rect x="416.5" y="378.8" width="1.2" height="1" fill="#2e261e" opacity="0.55"/><rect x="396.4" y="400.3" width="1.2" height="1" fill="#6a5a48" opacity="0.55"/><rect x="335.0" y="307.4" width="1.2" height="1" fill="#5e5040" opacity="0.55"/><rect x="556.9" y="360.6" width="1.2" height="1" fill="#30281f" opacity="0.55"/><rect x="327.0" y="401.8" width="1.2" height="1" fill="#7a6a58" opacity="0.55"/><rect x="390.2" y="329.4" width="1.2" height="1" fill="#7a6a58" opacity="0.55"/><rect x="402.5" y="333.3" width="1.2" height="1" fill="#6a5a48" opacity="0.55"/><rect x="734.3" y="425.9" width="1.2" height="1" fill="#6a5a48" opacity="0.55"/><rect x="488.8" y="358.2" width="1.2" height="1" fill="#30281f" opacity="0.55"/><rect x="330.4" y="326.9" width="1.2" height="1" fill="#30281f" opacity="0.55"/><rect x="601.3" y="427.5" width="1.2" height="1" fill="#30281f" opacity="0.55"/><rect x="347.3" y="329.4" width="1.2" height="1" fill="#2e261e" opacity="0.55"/><rect x="342.2" y="423.6" width="1.2" height="1" fill="#2e261e" opacity="0.55"/><rect x="472.4" y="419.2" width="1.2" height="1" fill="#30281f" opacity="0.55"/><rect x="467.1" y="378.9" width="1.2" height="1" fill="#30281f" opacity="0.55"/><rect x="646.8" y="388.8" width="1.2" height="1" fill="#5e5040" opacity="0.55"/><rect x="427.5" y="339.0" width="1.2" height="1" fill="#30281f" opacity="0.55"/><rect x="331.8" y="415.1" width="1.2" height="1" fill="#6a5a48" opacity="0.55"/><rect x="404.4" y="345.7" width="1.2" height="1" fill="#2e261e" opacity="0.55"/><rect x="324.7" y="417.0" width="1.2" height="1" fill="#30281f" opacity="0.55"/><rect x="577.7" y="349.4" width="1.2" height="1" fill="#30281f" opacity="0.55"/><rect x="634.3" y="427.7" width="1.2" height="1" fill="#30281f" opacity="0.55"/><rect x="718.2" y="344.8" width="1.2" height="1" fill="#2e261e" opacity="0.55"/><rect x="507.3" y="360.5" width="1.2" height="1" fill="#7a6a58" opacity="0.55"/><rect x="435.1" y="301.7" width="1.2" height="1" fill="#6a5a48" opacity="0.55"/><rect x="450.7" y="410.6" width="1.2" height="1" fill="#2e261e" opacity="0.55"/><rect x="587.9" y="360.5" width="1.2" height="1" fill="#2e261e" opacity="0.55"/><rect x="397.6" y="345.0" width="1.2" height="1" fill="#30281f" opacity="0.55"/><rect x="502.3" y="427.3" width="1.2" height="1" fill="#2e261e" opacity="0.55"/><rect x="464.0" y="361.7" width="1.2" height="1" fill="#2e261e" opacity="0.55"/><rect x="430.3" y="358.6" width="1.2" height="1" fill="#2e261e" opacity="0.55"/><rect x="774.1" y="432.7" width="1.2" height="1" fill="#5e5040" opacity="0.55"/><rect x="753.7" y="376.9" width="1.2" height="1" fill="#7a6a58" opacity="0.55"/><rect x="578.2" y="352.0" width="1.2" height="1" fill="#5e5040" opacity="0.55"/><rect x="423.2" y="415.6" width="1.2" height="1" fill="#6a5a48" opacity="0.55"/><rect x="730.7" y="397.1" width="1.2" height="1" fill="#30281f" opacity="0.55"/><rect x="334.8" y="394.7" width="1.2" height="1" fill="#2e261e" opacity="0.55"/><rect x="470.5" y="350.0" width="1.2" height="1" fill="#6a5a48" opacity="0.55"/><rect x="655.1" y="402.6" width="1.2" height="1" fill="#2e261e" opacity="0.55"/><rect x="475.4" y="387.1" width="1.2" height="1" fill="#6a5a48" opacity="0.55"/><rect x="353.7" y="421.3" width="1.2" height="1" fill="#5e5040" opacity="0.55"/><rect x="459.8" y="408.1" width="1.2" height="1" fill="#30281f" opacity="0.55"/><rect x="456.8" y="351.9" width="1.2" height="1" fill="#30281f" opacity="0.55"/><rect x="693.8" y="417.1" width="1.2" height="1" fill="#2e261e" opacity="0.55"/><rect x="497.3" y="405.7" width="1.2" height="1" fill="#7a6a58" opacity="0.55"/><rect x="659.5" y="359.9" width="1.2" height="1" fill="#30281f" opacity="0.55"/><rect x="490.4" y="382.5" width="1.2" height="1" fill="#2e261e" opacity="0.55"/><rect x="646.8" y="352.0" width="1.2" height="1" fill="#5e5040" opacity="0.55"/><rect x="398.9" y="323.9" width="1.2" height="1" fill="#7a6a58" opacity="0.55"/><rect x="396.1" y="397.4" width="1.2" height="1" fill="#5e5040" opacity="0.55"/><rect x="470.6" y="383.8" width="1.2" height="1" fill="#2e261e" opacity="0.55"/><rect x="560.5" y="367.8" width="1.2" height="1" fill="#30281f" opacity="0.55"/><rect x="643.3" y="375.2" width="1.2" height="1" fill="#6a5a48" opacity="0.55"/><rect x="374.8" y="400.9" width="1.2" height="1" fill="#7a6a58" opacity="0.55"/><rect x="754.4" y="416.0" width="1.2" height="1" fill="#5e5040" opacity="0.55"/><rect x="438.6" y="312.1" width="1.2" height="1" fill="#7a6a58" opacity="0.55"/><rect x="422.1" y="421.4" width="1.2" height="1" fill="#6a5a48" opacity="0.55"/><rect x="521.7" y="398.2" width="1.2" height="1" fill="#5e5040" opacity="0.55"/><rect x="719.6" y="335.2" width="1.2" height="1" fill="#6a5a48" opacity="0.55"/><rect x="488.9" y="426.1" width="1.2" height="1" fill="#30281f" opacity="0.55"/><rect x="768.4" y="391.1" width="1.2" height="1" fill="#30281f" opacity="0.55"/><rect x="565.7" y="389.0" width="1.2" height="1" fill="#2e261e" opacity="0.55"/><rect x="527.0" y="366.6" width="1.2" height="1" fill="#2e261e" opacity="0.55"/><rect x="779.1" y="409.2" width="1.2" height="1" fill="#5e5040" opacity="0.55"/><rect x="446.6" y="371.3" width="1.2" height="1" fill="#2e261e" opacity="0.55"/><rect x="349.6" y="345.7" width="1.2" height="1" fill="#30281f" opacity="0.55"/><rect x="365.5" y="383.6" width="1.2" height="1" fill="#2e261e" opacity="0.55"/><rect x="386.7" y="393.1" width="1.2" height="1" fill="#30281f" opacity="0.55"/><rect x="435.4" y="329.9" width="1.2" height="1" fill="#5e5040" opacity="0.55"/><rect x="629.3" y="391.9" width="1.2" height="1" fill="#2e261e" opacity="0.55"/><rect x="591.9" y="342.4" width="1.2" height="1" fill="#6a5a48" opacity="0.55"/><rect x="584.7" y="400.4" width="1.2" height="1" fill="#2e261e" opacity="0.55"/><rect x="792.0" y="411.2" width="1.2" height="1" fill="#30281f" opacity="0.55"/><rect x="460.2" y="346.0" width="1.2" height="1" fill="#2e261e" opacity="0.55"/><rect x="341.9" y="418.8" width="1.2" height="1" fill="#7a6a58" opacity="0.55"/><rect x="415.8" y="392.4" width="1.2" height="1" fill="#30281f" opacity="0.55"/><rect x="535.1" y="374.4" width="1.2" height="1" fill="#7a6a58" opacity="0.55"/><rect x="401.9" y="306.8" width="1.2" height="1" fill="#6a5a48" opacity="0.55"/><rect x="546.4" y="430.3" width="1.2" height="1" fill="#30281f" opacity="0.55"/><rect x="361.4" y="394.5" width="1.2" height="1" fill="#5e5040" opacity="0.55"/><rect x="448.2" y="384.7" width="1.2" height="1" fill="#30281f" opacity="0.55"/><rect x="555.9" y="403.6" width="1.2" height="1" fill="#7a6a58" opacity="0.55"/><rect x="325.0" y="422.1" width="1.2" height="1" fill="#7a6a58" opacity="0.55"/><rect x="622.9" y="424.2" width="1.2" height="1" fill="#7a6a58" opacity="0.55"/><rect x="498.0" y="427.8" width="1.2" height="1" fill="#5e5040" opacity="0.55"/><rect x="727.8" y="423.0" width="1.2" height="1" fill="#2e261e" opacity="0.55"/><rect x="370.1" y="394.8" width="1.2" height="1" fill="#7a6a58" opacity="0.55"/><rect x="409.8" y="409.2" width="1.2" height="1" fill="#7a6a58" opacity="0.55"/><rect x="431.7" y="315.5" width="1.2" height="1" fill="#7a6a58" opacity="0.55"/><rect x="348.8" y="311.6" width="1.2" height="1" fill="#30281f" opacity="0.55"/><rect x="756.4" y="425.5" width="1.2" height="1" fill="#30281f" opacity="0.55"/><rect x="524.5" y="396.4" width="1.2" height="1" fill="#7a6a58" opacity="0.55"/><rect x="610.9" y="382.2" width="1.2" height="1" fill="#2e261e" opacity="0.55"/><rect x="534.2" y="428.9" width="1.2" height="1" fill="#6a5a48" opacity="0.55"/><rect x="791.9" y="412.7" width="1.2" height="1" fill="#30281f" opacity="0.55"/><rect x="412.8" y="395.3" width="1.2" height="1" fill="#6a5a48" opacity="0.55"/><rect x="336.4" y="380.1" width="1.2" height="1" fill="#5e5040" opacity="0.55"/><rect x="639.2" y="367.0" width="1.2" height="1" fill="#30281f" opacity="0.55"/><rect x="325.2" y="427.0" width="1.2" height="1" fill="#2e261e" opacity="0.55"/><rect x="463.3" y="357.3" width="1.2" height="1" fill="#5e5040" opacity="0.55"/><rect x="645.8" y="374.2" width="1.2" height="1" fill="#30281f" opacity="0.55"/><rect x="361.9" y="341.0" width="1.2" height="1" fill="#30281f" opacity="0.55"/><rect x="527.0" y="369.7" width="1.2" height="1" fill="#2e261e" opacity="0.55"/><rect x="789.7" y="427.8" width="1.2" height="1" fill="#5e5040" opacity="0.55"/><rect x="360.2" y="407.1" width="1.2" height="1" fill="#7a6a58" opacity="0.55"/><rect x="595.7" y="426.6" width="1.2" height="1" fill="#30281f" opacity="0.55"/><rect x="737.2" y="369.1" width="1.2" height="1" fill="#6a5a48" opacity="0.55"/><rect x="676.8" y="391.0" width="1.2" height="1" fill="#2e261e" opacity="0.55"/><rect x="638.7" y="347.6" width="1.2" height="1" fill="#5e5040" opacity="0.55"/><rect x="774.7" y="346.0" width="1.2" height="1" fill="#2e261e" opacity="0.55"/><rect x="592.7" y="350.9" width="1.2" height="1" fill="#6a5a48" opacity="0.55"/><rect x="430.3" y="428.7" width="1.2" height="1" fill="#2e261e" opacity="0.55"/><rect x="366.7" y="369.2" width="1.2" height="1" fill="#7a6a58" opacity="0.55"/><rect x="541.4" y="370.6" width="1.2" height="1" fill="#6a5a48" opacity="0.55"/><rect x="674.8" y="420.7" width="1.2" height="1" fill="#5e5040" opacity="0.55"/><rect x="359.6" y="352.5" width="1.2" height="1" fill="#6a5a48" opacity="0.55"/><rect x="563.0" y="366.0" width="1.2" height="1" fill="#6a5a48" opacity="0.55"/><rect x="622.4" y="427.6" width="1.2" height="1" fill="#5e5040" opacity="0.55"/><rect x="370.1" y="409.9" width="1.2" height="1" fill="#30281f" opacity="0.55"/><rect x="582.8" y="428.6" width="1.2" height="1" fill="#2e261e" opacity="0.55"/><rect x="591.8" y="402.4" width="1.2" height="1" fill="#2e261e" opacity="0.55"/><rect x="500.6" y="381.2" width="1.2" height="1" fill="#30281f" opacity="0.55"/><rect x="434.9" y="347.6" width="1.2" height="1" fill="#6a5a48" opacity="0.55"/><rect x="658.6" y="427.0" width="1.2" height="1" fill="#30281f" opacity="0.55"/><rect x="465.3" y="393.2" width="1.2" height="1" fill="#30281f" opacity="0.55"/><rect x="376.2" y="396.0" width="1.2" height="1" fill="#7a6a58" opacity="0.55"/><rect x="401.8" y="398.4" width="1.2" height="1" fill="#7a6a58" opacity="0.55"/><rect x="707.8" y="397.1" width="1.2" height="1" fill="#6a5a48" opacity="0.55"/><rect x="500.4" y="397.3" width="1.2" height="1" fill="#7a6a58" opacity="0.55"/><rect x="585.0" y="406.2" width="1.2" height="1" fill="#6a5a48" opacity="0.55"/><rect x="337.4" y="420.8" width="1.2" height="1" fill="#2e261e" opacity="0.55"/><rect x="443.5" y="323.3" width="1.2" height="1" fill="#30281f" opacity="0.55"/><rect x="331.2" y="431.5" width="1.2" height="1" fill="#30281f" opacity="0.55"/><rect x="375.6" y="299.9" width="1.2" height="1" fill="#6a5a48" opacity="0.55"/><rect x="356.5" y="332.1" width="1.2" height="1" fill="#2e261e" opacity="0.55"/><rect x="651.5" y="348.8" width="1.2" height="1" fill="#2e261e" opacity="0.55"/><rect x="800.7" y="400.6" width="1.2" height="1" fill="#7a6a58" opacity="0.55"/><rect x="562.4" y="415.7" width="1.2" height="1" fill="#6a5a48" opacity="0.55"/><rect x="356.9" y="381.4" width="1.2" height="1" fill="#5e5040" opacity="0.55"/><rect x="509.8" y="361.7" width="1.2" height="1" fill="#2e261e" opacity="0.55"/><rect x="654.3" y="358.0" width="1.2" height="1" fill="#2e261e" opacity="0.55"/><rect x="740.9" y="380.1" width="1.2" height="1" fill="#6a5a48" opacity="0.55"/><rect x="494.6" y="368.8" width="1.2" height="1" fill="#7a6a58" opacity="0.55"/><rect x="751.0" y="377.1" width="1.2" height="1" fill="#6a5a48" opacity="0.55"/><rect x="422.7" y="408.4" width="1.2" height="1" fill="#30281f" opacity="0.55"/><rect x="480.4" y="360.7" width="1.2" height="1" fill="#7a6a58" opacity="0.55"/><rect x="472.2" y="342.6" width="1.2" height="1" fill="#30281f" opacity="0.55"/><rect x="542.0" y="431.2" width="1.2" height="1" fill="#6a5a48" opacity="0.55"/><rect x="624.5" y="395.9" width="1.2" height="1" fill="#2e261e" opacity="0.55"/><rect x="594.7" y="368.8" width="1.2" height="1" fill="#2e261e" opacity="0.55"/><rect x="590.7" y="401.8" width="1.2" height="1" fill="#2e261e" opacity="0.55"/><rect x="693.4" y="383.1" width="1.2" height="1" fill="#6a5a48" opacity="0.55"/><rect x="703.5" y="415.7" width="1.2" height="1" fill="#2e261e" opacity="0.55"/><rect x="688.2" y="397.6" width="1.2" height="1" fill="#5e5040" opacity="0.55"/><rect x="740.8" y="394.3" width="1.2" height="1" fill="#7a6a58" opacity="0.55"/><rect x="350.1" y="342.9" width="1.2" height="1" fill="#7a6a58" opacity="0.55"/><rect x="746.0" y="403.4" width="1.2" height="1" fill="#5e5040" opacity="0.55"/><rect x="433.9" y="344.5" width="1.2" height="1" fill="#2e261e" opacity="0.55"/><rect x="419.8" y="417.9" width="1.2" height="1" fill="#30281f" opacity="0.55"/><rect x="515.8" y="350.9" width="1.2" height="1" fill="#7a6a58" opacity="0.55"/><rect x="768.1" y="376.8" width="1.2" height="1" fill="#2e261e" opacity="0.55"/><rect x="670.5" y="372.0" width="1.2" height="1" fill="#7a6a58" opacity="0.55"/><rect x="356.4" y="322.9" width="1.2" height="1" fill="#6a5a48" opacity="0.55"/><rect x="491.0" y="360.6" width="1.2" height="1" fill="#30281f" opacity="0.55"/><rect x="667.9" y="422.4" width="1.2" height="1" fill="#30281f" opacity="0.55"/><rect x="752.8" y="371.3" width="1.2" height="1" fill="#2e261e" opacity="0.55"/><rect x="330.7" y="303.5" width="1.2" height="1" fill="#30281f" opacity="0.55"/><rect x="417.4" y="379.0" width="1.2" height="1" fill="#5e5040" opacity="0.55"/><rect x="674.0" y="428.0" width="1.2" height="1" fill="#5e5040" opacity="0.55"/><rect x="344.4" y="307.0" width="1.2" height="1" fill="#5e5040" opacity="0.55"/><rect x="411.5" y="370.0" width="1.2" height="1" fill="#6a5a48" opacity="0.55"/><rect x="628.8" y="422.5" width="1.2" height="1" fill="#2e261e" opacity="0.55"/><rect x="475.7" y="415.0" width="1.2" height="1" fill="#6a5a48" opacity="0.55"/><rect x="633.1" y="352.1" width="1.2" height="1" fill="#7a6a58" opacity="0.55"/><rect x="404.9" y="414.4" width="1.2" height="1" fill="#6a5a48" opacity="0.55"/><rect x="362.9" y="380.3" width="1.2" height="1" fill="#30281f" opacity="0.55"/><rect x="796.1" y="351.3" width="1.2" height="1" fill="#30281f" opacity="0.55"/><rect x="473.4" y="386.0" width="1.2" height="1" fill="#7a6a58" opacity="0.55"/><rect x="347.9" y="380.5" width="1.2" height="1" fill="#7a6a58" opacity="0.55"/><rect x="396.4" y="299.5" width="1.2" height="1" fill="#2e261e" opacity="0.55"/><rect x="389.6" y="401.3" width="1.2" height="1" fill="#6a5a48" opacity="0.55"/><rect x="493.1" y="346.2" width="1.2" height="1" fill="#7a6a58" opacity="0.55"/><rect x="580.1" y="377.0" width="1.2" height="1" fill="#5e5040" opacity="0.55"/><rect x="394.8" y="430.5" width="1.2" height="1" fill="#5e5040" opacity="0.55"/><rect x="480.1" y="397.8" width="1.2" height="1" fill="#7a6a58" opacity="0.55"/><rect x="712.3" y="361.9" width="1.2" height="1" fill="#6a5a48" opacity="0.55"/><rect x="694.3" y="339.1" width="1.2" height="1" fill="#5e5040" opacity="0.55"/><rect x="791.1" y="358.6" width="1.2" height="1" fill="#7a6a58" opacity="0.55"/><rect x="494.8" y="369.0" width="1.2" height="1" fill="#7a6a58" opacity="0.55"/><rect x="549.8" y="386.1" width="1.2" height="1" fill="#7a6a58" opacity="0.55"/><rect x="393.4" y="382.5" width="1.2" height="1" fill="#30281f" opacity="0.55"/><rect x="334.4" y="315.2" width="1.2" height="1" fill="#6a5a48" opacity="0.55"/><rect x="612.5" y="397.3" width="1.2" height="1" fill="#2e261e" opacity="0.55"/><rect x="739.9" y="413.4" width="1.2" height="1" fill="#2e261e" opacity="0.55"/><rect x="575.2" y="344.7" width="1.2" height="1" fill="#2e261e" opacity="0.55"/><rect x="533.4" y="413.9" width="1.2" height="1" fill="#2e261e" opacity="0.55"/><rect x="627.0" y="343.8" width="1.2" height="1" fill="#30281f" opacity="0.55"/><rect x="631.5" y="351.7" width="1.2" height="1" fill="#7a6a58" opacity="0.55"/><rect x="349.9" y="373.7" width="1.2" height="1" fill="#30281f" opacity="0.55"/><rect x="757.3" y="348.1" width="1.2" height="1" fill="#2e261e" opacity="0.55"/><rect x="335.8" y="299.8" width="1.2" height="1" fill="#30281f" opacity="0.55"/><rect x="437.3" y="345.2" width="1.2" height="1" fill="#7a6a58" opacity="0.55"/><rect x="686.2" y="384.4" width="1.2" height="1" fill="#7a6a58" opacity="0.55"/><rect x="744.0" y="364.8" width="1.2" height="1" fill="#5e5040" opacity="0.55"/><rect x="701.4" y="361.9" width="1.2" height="1" fill="#7a6a58" opacity="0.55"/><rect x="322.9" y="415.6" width="1.2" height="1" fill="#2e261e" opacity="0.55"/><rect x="398.7" y="389.9" width="1.2" height="1" fill="#5e5040" opacity="0.55"/><rect x="346.1" y="403.4" width="1.2" height="1" fill="#7a6a58" opacity="0.55"/><rect x="343.2" y="402.3" width="1.2" height="1" fill="#30281f" opacity="0.55"/><rect x="408.7" y="414.5" width="1.2" height="1" fill="#7a6a58" opacity="0.55"/><rect x="650.6" y="406.5" width="1.2" height="1" fill="#2e261e" opacity="0.55"/><rect x="402.2" y="389.9" width="1.2" height="1" fill="#6a5a48" opacity="0.55"/><rect x="520.2" y="384.3" width="1.2" height="1" fill="#30281f" opacity="0.55"/><rect x="745.2" y="430.2" width="1.2" height="1" fill="#6a5a48" opacity="0.55"/><rect x="385.9" y="377.9" width="1.2" height="1" fill="#5e5040" opacity="0.55"/><rect x="330.6" y="431.7" width="1.2" height="1" fill="#7a6a58" opacity="0.55"/><rect x="352.1" y="312.0" width="1.2" height="1" fill="#30281f" opacity="0.55"/><rect x="787.9" y="368.5" width="1.2" height="1" fill="#6a5a48" opacity="0.55"/><rect x="407.1" y="390.2" width="1.2" height="1" fill="#2e261e" opacity="0.55"/><rect x="625.6" y="371.2" width="1.2" height="1" fill="#6a5a48" opacity="0.55"/><rect x="575.9" y="411.2" width="1.2" height="1" fill="#6a5a48" opacity="0.55"/><rect x="786.4" y="417.1" width="1.2" height="1" fill="#6a5a48" opacity="0.55"/><rect x="448.3" y="306.4" width="1.2" height="1" fill="#6a5a48" opacity="0.55"/><rect x="415.5" y="303.5" width="1.2" height="1" fill="#5e5040" opacity="0.55"/><rect x="480.1" y="352.8" width="1.2" height="1" fill="#7a6a58" opacity="0.55"/><rect x="522.6" y="429.3" width="1.2" height="1" fill="#30281f" opacity="0.55"/><rect x="687.0" y="416.9" width="1.2" height="1" fill="#2e261e" opacity="0.55"/><rect x="753.0" y="383.4" width="1.2" height="1" fill="#2e261e" opacity="0.55"/><rect x="613.4" y="423.0" width="1.2" height="1" fill="#7a6a58" opacity="0.55"/><rect x="654.7" y="396.3" width="1.2" height="1" fill="#2e261e" opacity="0.55"/><rect x="718.1" y="387.2" width="1.2" height="1" fill="#6a5a48" opacity="0.55"/><rect x="726.5" y="403.6" width="1.2" height="1" fill="#6a5a48" opacity="0.55"/><rect x="516.2" y="373.0" width="1.2" height="1" fill="#30281f" opacity="0.55"/><rect x="679.9" y="413.1" width="1.2" height="1" fill="#5e5040" opacity="0.55"/><rect x="485.7" y="371.3" width="1.2" height="1" fill="#30281f" opacity="0.55"/><rect x="433.8" y="382.6" width="1.2" height="1" fill="#30281f" opacity="0.55"/><rect x="638.3" y="409.4" width="1.2" height="1" fill="#6a5a48" opacity="0.55"/><rect x="623.5" y="370.9" width="1.2" height="1" fill="#2e261e" opacity="0.55"/><rect x="765.4" y="401.1" width="1.2" height="1" fill="#7a6a58" opacity="0.55"/><rect x="758.1" y="361.4" width="1.2" height="1" fill="#7a6a58" opacity="0.55"/><rect x="572.1" y="361.8" width="1.2" height="1" fill="#2e261e" opacity="0.55"/><rect x="685.2" y="346.5" width="1.2" height="1" fill="#2e261e" opacity="0.55"/><rect x="574.7" y="407.6" width="1.2" height="1" fill="#2e261e" opacity="0.55"/><rect x="776.7" y="413.4" width="1.2" height="1" fill="#6a5a48" opacity="0.55"/><rect x="475.9" y="346.2" width="1.2" height="1" fill="#30281f" opacity="0.55"/><rect x="380.2" y="317.9" width="1.2" height="1" fill="#7a6a58" opacity="0.55"/><rect x="501.4" y="346.6" width="1.2" height="1" fill="#5e5040" opacity="0.55"/><rect x="571.8" y="358.6" width="1.2" height="1" fill="#6a5a48" opacity="0.55"/><rect x="626.3" y="396.4" width="1.2" height="1" fill="#2e261e" opacity="0.55"/><rect x="648.2" y="346.9" width="1.2" height="1" fill="#5e5040" opacity="0.55"/><rect x="638.6" y="381.7" width="1.2" height="1" fill="#5e5040" opacity="0.55"/><rect x="484.6" y="348.8" width="1.2" height="1" fill="#6a5a48" opacity="0.55"/><rect x="445.9" y="377.3" width="1.2" height="1" fill="#7a6a58" opacity="0.55"/><rect x="627.0" y="413.8" width="1.2" height="1" fill="#2e261e" opacity="0.55"/><rect x="382.7" y="427.3" width="1.2" height="1" fill="#7a6a58" opacity="0.55"/><rect x="618.2" y="347.5" width="1.2" height="1" fill="#6a5a48" opacity="0.55"/><rect x="666.1" y="348.1" width="1.2" height="1" fill="#6a5a48" opacity="0.55"/>
<g filter="url(#b05)">
<!-- left boat -->
<path d="M436 312L470 300L530 282L563 268L572 285L580 320L585 350L590 376L540 372L490 360L462 345L440 325z" fill="url(#hull)"/>
<path d="M436 312L470 298L530 280L563 268L566 290L520 300L462 322L440 325z" fill="#5a4a36"/>
<path d="M462 322L566 292" stroke="#6a6a54" stroke-width="2" opacity="0.7"/><path d="M560 266L572 290" stroke="#7a4a2a" stroke-width="4"/>
<path d="M470 333L572 305M478 343L576 320M490 352L580 336" stroke="#5e6656" stroke-width="1.2" opacity="0.35"/>
<path d="M563 268L574 290L580 320L586 350L590 376" stroke="#6a4a30" stroke-width="3" fill="none" opacity="0.8"/>
<path d="M540 345L586 350" stroke="#6a3a28" stroke-width="2" opacity="0.6"/>
<path d="M551 242L566 268" stroke="#3a3028" stroke-width="1.2"/>
<path d="M558 254L545 262M556 258L575 280" stroke="#3a3028" stroke-width="0.6"/>
<path d="M455 281L472 299" stroke="#4a3a2a" stroke-width="3"/>
<!-- right boat -->
<path d="M570 292L600 296L640 290L664 294L672 320L679 355L690 386L640 385L600 383L583 381L575 340z" fill="url(#hull2)"/>
<path d="M570 292L600 296L640 290L664 294L655 305L620 330L590 345L576 340z" fill="#3c3024"/>
<path d="M600 302L650 296M595 320L640 305M600 333L630 318" stroke="#7a6a50" stroke-width="1.5" opacity="0.3"/>
<path d="M664 294L672 320L679 355L690 386L684 386L670 350L660 310z" fill="#9a8870"/>
<path d="M615 350L668 325L678 365L684 383L630 380z" fill="#6c6250" opacity="0.6"/>
<path d="M568 290L582 300L588 340L584 380L574 378z" fill="#525646"/>
<path d="M572 345L588 348L586 380L574 378z" fill="#3a2a20"/>
<path d="M586 345L592 385M596 345L602 385M586 355h11M587 365h11M588 375h11" stroke="#6a3a28" stroke-width="1"/>
<path d="M570 384L690 388L680 395L580 392z" fill="#231c16" opacity="0.8"/>
</g>
</g>
</svg>
<div class="a" style="left:321px;top:112px;width:481px;height:1px;background:repeating-linear-gradient(90deg,#000 0 1px,#fff 1px 2px)"></div>
<div class="a" style="left:321px;top:432px;width:481px;height:1px;background:repeating-linear-gradient(90deg,#fff 0 1px,#000 1px 2px)"></div>
<div class="a" style="left:801px;top:112px;width:1px;height:321px;background:#777"></div>
<div class="a" style="left:321px;top:112px;width:1px;height:321px;background:#666"></div>
<div class="a t " style="left:801.5px;top:102.5px;font-size:11px;color:#767676;letter-spacing:0.95px">5760,3840</div>
<div class="a t " style="left:802.5px;top:423px;font-size:11px;color:#a2a2a2;letter-spacing:1.05px">(5760x3840)</div>
<div class="a t " style="left:322px;top:103px;font-size:8px;color:#121212">0,0</div>
<div class="a t " style="left:72px;top:452.14px;font-size:12px;font-weight:bold;color:#f0f0f0;letter-spacing:0.2px">5760x3840&nbsp; bbox: 0 0 5760 3840 channels: rgb</div>
<div class="a t " style="left:463px;top:452.14px;font-size:12px;font-weight:bold;color:#f0f0f0;letter-spacing:0.7px">x=2724 y=-84</div>
<svg class="a" style="left:1067px;top:453px;" width="10" height="5" viewBox="0 0 10 5"><path d="M0 0h10L5 5z" fill="#f0f0f0"/></svg>
<div class="a" style="left:95px;top:470px;width:913px;height:39px;background:#3c3c3c"></div>
<div class="a" style="left:1008px;top:477px;width:1px;height:32px;background:#1a1a1a"></div>
<div class="a" style="left:101px;top:472px;width:907px;height:3px;background:#8c8c8c"></div>
<div class="a" style="left:47px;top:478px;width:47px;height:29px;background:#3c3c3c;border-radius:2px"></div>
<div class="a t " style="left:56px;top:488.72px;font-size:12.5px;color:#8e8e8e;-webkit-text-stroke:0.2px #8e8e8e">1001</div>
<div class="a" style="left:1015px;top:478px;width:47px;height:30px;background:#3c3c3c;border-radius:2px"></div>
<div class="a t " style="left:1024.5px;top:487.92px;font-size:12.5px;color:#8e8e8e;-webkit-text-stroke:0.2px #8e8e8e">1050</div>
<svg class="a" style="left:1069px;top:500px;" width="9" height="8" viewBox="0 0 9 8"><path d="M1 0.5l3.5 3 3.5-3M1 4.5l3.5 3 3.5-3" stroke="#d0d0d0" stroke-width="1.2" fill="none"/></svg>
<svg class="a" style="left:95px;top:470px;" width="913" height="39" viewBox="0 0 913 39"><rect x="6.2" y="16.5" width="1" height="7" fill="#e6e6e6"/><rect x="24.3" y="21" width="1" height="3" fill="#e6e6e6"/><rect x="42.5" y="21" width="1" height="3" fill="#e6e6e6"/><rect x="60.6" y="21" width="1" height="3" fill="#e6e6e6"/><rect x="78.8" y="21" width="1" height="3" fill="#e6e6e6"/><rect x="96.9" y="21" width="1" height="3" fill="#e6e6e6"/><rect x="115.1" y="21" width="1" height="3" fill="#e6e6e6"/><rect x="133.2" y="21" width="1" height="3" fill="#e6e6e6"/><rect x="151.4" y="21" width="1" height="3" fill="#e6e6e6"/><rect x="169.5" y="16.5" width="1" height="7" fill="#e6e6e6"/><rect x="187.6" y="21" width="1" height="3" fill="#e6e6e6"/><rect x="205.8" y="21" width="1" height="3" fill="#e6e6e6"/><rect x="223.9" y="21" width="1" height="3" fill="#e6e6e6"/><rect x="242.1" y="21" width="1" height="3" fill="#e6e6e6"/><rect x="260.2" y="21" width="1" height="3" fill="#e6e6e6"/><rect x="278.4" y="21" width="1" height="3" fill="#e6e6e6"/><rect x="296.5" y="21" width="1" height="3" fill="#e6e6e6"/><rect x="314.7" y="21" width="1" height="3" fill="#e6e6e6"/><rect x="332.8" y="21" width="1" height="3" fill="#e6e6e6"/><rect x="351.0" y="16.5" width="1" height="7" fill="#e6e6e6"/><rect x="369.1" y="21" width="1" height="3" fill="#e6e6e6"/><rect x="387.2" y="21" width="1" height="3" fill="#e6e6e6"/><rect x="405.4" y="21" width="1" height="3" fill="#e6e6e6"/><rect x="423.5" y="21" width="1" height="3" fill="#e6e6e6"/><rect x="441.7" y="21" width="1" height="3" fill="#e6e6e6"/><rect x="459.8" y="21" width="1" height="3" fill="#e6e6e6"/><rect x="478.0" y="21" width="1" height="3" fill="#e6e6e6"/><rect x="496.1" y="21" width="1" height="3" fill="#e6e6e6"/><rect x="514.3" y="21" width="1" height="3" fill="#e6e6e6"/><rect x="532.4" y="16.5" width="1" height="7" fill="#e6e6e6"/><rect x="550.6" y="21" width="1" height="3" fill="#e6e6e6"/><rect x="568.7" y="21" width="1" height="3" fill="#e6e6e6"/><rect x="586.8" y="21" width="1" height="3" fill="#e6e6e6"/><rect x="605.0" y="21" width="1" height="3" fill="#e6e6e6"/><rect x="623.1" y="21" width="1" height="3" fill="#e6e6e6"/><rect x="641.3" y="21" width="1" height="3" fill="#e6e6e6"/><rect x="659.4" y="21" width="1" height="3" fill="#e6e6e6"/><rect x="677.6" y="21" width="1" height="3" fill="#e6e6e6"/><rect x="695.7" y="21" width="1" height="3" fill="#e6e6e6"/><rect x="713.9" y="16.5" width="1" height="7" fill="#e6e6e6"/><rect x="732.0" y="21" width="1" height="3" fill="#e6e6e6"/><rect x="750.1" y="21" width="1" height="3" fill="#e6e6e6"/><rect x="768.3" y="21" width="1" height="3" fill="#e6e6e6"/><rect x="786.4" y="21" width="1" height="3" fill="#e6e6e6"/><rect x="804.6" y="21" width="1" height="3" fill="#e6e6e6"/><rect x="822.7" y="21" width="1" height="3" fill="#e6e6e6"/><rect x="840.9" y="21" width="1" height="3" fill="#e6e6e6"/><rect x="859.0" y="21" width="1" height="3" fill="#e6e6e6"/><rect x="877.2" y="21" width="1" height="3" fill="#e6e6e6"/><rect x="895.3" y="16.5" width="1" height="13" fill="#e6e6e6"/></svg>
<div class="a t " style="left:254.005px;top:499.16px;font-size:9.5px;font-weight:bold;color:#d4dce4;width:22px;text-align:center;letter-spacing:0.2px">1010</div>
<div class="a t " style="left:435.455px;top:499.16px;font-size:9.5px;font-weight:bold;color:#d4dce4;width:22px;text-align:center;letter-spacing:0.2px">1020</div>
<div class="a t " style="left:616.9050000000001px;top:499.16px;font-size:9.5px;font-weight:bold;color:#d4dce4;width:22px;text-align:center;letter-spacing:0.2px">1030</div>
<div class="a t " style="left:798.355px;top:499.16px;font-size:9.5px;font-weight:bold;color:#d4dce4;width:22px;text-align:center;letter-spacing:0.2px">1040</div>
<div class="a t " style="left:979.8050000000001px;top:499.16px;font-size:9.5px;font-weight:bold;color:#d4dce4;width:22px;text-align:center;letter-spacing:0.2px">1050</div>
<div class="a t " style="left:101.5px;top:499.16px;font-size:9.5px;font-weight:bold;color:#d4dce4;letter-spacing:0.2px">1001</div>
<div class="a t " style="left:101.5px;top:475.96px;font-size:9.5px;font-weight:bold;color:#f39c12;letter-spacing:0.2px">1001</div>
<svg class="a" style="left:95px;top:484px;" width="14" height="13" viewBox="0 0 14 13"><path d="M0.5 1h12L6.5 8z" fill="#f39c12"/><rect x="6" y="7" width="1.2" height="5" fill="#e6e6e6"/></svg>
<div class="a" style="left:47px;top:514px;width:44px;height:20px;background:#393939;border:1px solid #2e2e2e;border-radius:3px 0 0 3px"></div>
<div class="a" style="left:91px;top:514px;width:15px;height:20px;background:#4d4d4d;border:1px solid #2e2e2e;border-left:none;border-radius:0 3px 3px 0"></div>
<div class="dd" style="left:96px;top:522px"></div>
<div class="a t tb" style="left:50px;top:518.42px;font-size:12.5px;">24*</div>
<div class="a t tb" style="left:114px;top:518.42px;font-size:12.5px;letter-spacing:-0.3px">TF</div>
<div class="dd" style="left:132px;top:521px"></div>
<div class="a" style="left:145px;top:514px;width:1px;height:20px;background:#2a2a2a"></div>
<div class="a t tb" style="left:154px;top:518.42px;font-size:12.5px;">Global</div>
<div class="dd" style="left:204px;top:521px"></div>
<div class="a" style="left:217px;top:514px;width:1px;height:20px;background:#2a2a2a"></div>
<svg class="a" style="left:333px;top:517px;" width="22" height="16" viewBox="0 0 22 16"><path d="M3 7a6 5 0 0 1 10-3" stroke="#a8a8a8" stroke-width="2" fill="none"/><path d="M13 1l3 4-4 1z" fill="#a8a8a8"/><path d="M15 9a6 5 0 0 1-10 3" stroke="#a8a8a8" stroke-width="2" fill="none"/><path d="M5 15l-3-4 4-1z" fill="#a8a8a8"/><path d="M16 11h5l-2.5 3z" fill="#e0e0e0"/></svg>
<div class="a" style="left:362px;top:512px;width:18px;height:24px;background:#474747;border:1px solid #2c2c2c;border-radius:3px;box-shadow:inset 0 1px 0 #4e4e4e;"></div>
<div class="a t " style="left:368.2px;top:518.57px;font-size:11.5px;font-family:Liberation Serif;font-weight:bold;color:#e0e0e0">I</div>
<div class="a" style="left:381px;top:512px;width:30px;height:24px;background:#474747;border:1px solid #2c2c2c;border-radius:3px;box-shadow:inset 0 1px 0 #4e4e4e;"></div>
<svg class="a" style="left:389px;top:517px;" width="14" height="13" viewBox="0 0 14 13"><rect x="0.7" y="1" width="4" height="10.6" fill="#a8a8a8"/><path d="M13 1v10.6L4.7 6.3z" fill="#a8a8a8"/></svg>
<div class="a" style="left:413px;top:512px;width:30px;height:24px;background:#474747;border:1px solid #2c2c2c;border-radius:3px;box-shadow:inset 0 1px 0 #4e4e4e;"></div>
<svg class="a" style="left:417px;top:517px;" width="20" height="14" viewBox="0 0 20 14"><circle cx="5.8" cy="9.5" r="2.2" fill="none" stroke="#a8a8a8" stroke-width="1.4"/><path d="M5.8 2v5.3M5.8 4h1.6" stroke="#a8a8a8" stroke-width="1.4"/><path d="M18.4 1.5v11L9.6 7z" fill="#a8a8a8"/></svg>
<div class="a" style="left:445px;top:512px;width:30px;height:24px;background:#474747;border:1px solid #2c2c2c;border-radius:3px;box-shadow:inset 0 1px 0 #4e4e4e;"></div>
<svg class="a" style="left:453px;top:517px;" width="15" height="14" viewBox="0 0 15 14"><path d="M10.7 1.4v11.1L1 7z" fill="#a8a8a8"/><rect x="10.7" y="1.4" width="2.9" height="11.1" fill="#a8a8a8"/></svg>
<div class="a" style="left:477px;top:512px;width:30px;height:24px;background:#474747;border:1px solid #2c2c2c;border-radius:3px;box-shadow:inset 0 1px 0 #4e4e4e;"></div>
<svg class="a" style="left:486px;top:517px;" width="12" height="14" viewBox="0 0 12 14"><path d="M11 1.4v11.1L1 7z" fill="#a8a8a8"/></svg>
<div class="a" style="left:510px;top:513px;width:47px;height:22px;background:#3c3c3c;border-radius:2px"></div>
<div class="a t " style="left:518.2px;top:519.01px;font-size:11.8px;color:#f39c12;font-weight:bold;letter-spacing:0.3px">1001</div>
<div class="a" style="left:559px;top:512px;width:30px;height:24px;background:#474747;border:1px solid #2c2c2c;border-radius:3px;box-shadow:inset 0 1px 0 #4e4e4e;"></div>
<svg class="a" style="left:568px;top:517px;" width="12" height="14" viewBox="0 0 12 14"><path d="M1 1.4v11.1L11 7z" fill="#a8a8a8"/></svg>
<div class="a" style="left:591px;top:512px;width:30px;height:24px;background:#474747;border:1px solid #2c2c2c;border-radius:3px;box-shadow:inset 0 1px 0 #4e4e4e;"></div>
<svg class="a" style="left:599px;top:517px;" width="14" height="14" viewBox="0 0 14 14"><rect x="0.8" y="1.4" width="3.2" height="11.4" fill="#a8a8a8"/><path d="M4 1.4v11.4L12.6 7z" fill="#a8a8a8"/></svg>
<div class="a" style="left:623px;top:512px;width:30px;height:24px;background:#474747;border:1px solid #2c2c2c;border-radius:3px;box-shadow:inset 0 1px 0 #4e4e4e;"></div>
<svg class="a" style="left:630px;top:517px;" width="17" height="14" viewBox="0 0 17 14"><path d="M0.5 1.4v11.1L10 7z" fill="#a8a8a8"/><circle cx="12.6" cy="10" r="2.1" fill="none" stroke="#a8a8a8" stroke-width="1.4"/><path d="M12.6 2.5v5.5M12.6 4.5h1.6" stroke="#a8a8a8" stroke-width="1.4"/></svg>
<div class="a" style="left:655px;top:512px;width:30px;height:24px;background:#474747;border:1px solid #2c2c2c;border-radius:3px;box-shadow:inset 0 1px 0 #4e4e4e;"></div>
<svg class="a" style="left:663px;top:517px;" width="14" height="14" viewBox="0 0 14 14"><path d="M0.7 1.4v11.4L9.6 7z" fill="#a8a8a8"/><rect x="9.6" y="1.4" width="3.4" height="11.4" fill="#a8a8a8"/></svg>
<div class="a" style="left:687px;top:512px;width:16px;height:24px;background:#474747;border:1px solid #2c2c2c;border-radius:3px;box-shadow:inset 0 1px 0 #4e4e4e;"></div>
<div class="a t " style="left:690.8px;top:518.87px;font-size:11.5px;color:#e8e8e8;-webkit-text-stroke:0.3px #e8e8e8">O</div>
<div class="a" style="left:717px;top:512px;width:20px;height:24px;background:#474747;border:1px solid #2c2c2c;border-radius:3px;box-shadow:inset 0 1px 0 #4e4e4e;"></div>
<svg class="a" style="left:721px;top:520px;" width="12" height="8" viewBox="0 0 12 8"><path d="M6 0.5v7L0.8 4zM11.5 0.5v7L6.3 4z" fill="#a8a8a8"/></svg>
<div class="a" style="left:739px;top:514px;width:21px;height:20px;background:#333;border:1px solid #2c2c2c;border-radius:2px"></div>
<div class="a t " style="left:742px;top:518.61px;font-size:11.8px;font-weight:bold;color:#e8e8e8">10</div>
<div class="a" style="left:763px;top:512px;width:20px;height:24px;background:#474747;border:1px solid #2c2c2c;border-radius:3px;box-shadow:inset 0 1px 0 #4e4e4e;"></div>
<svg class="a" style="left:767px;top:520px;" width="12" height="8" viewBox="0 0 12 8"><path d="M0.8 0.5v7L6 4zM6.3 0.5v7L11.5 4z" fill="#a8a8a8"/></svg>
<svg class="a" style="left:926px;top:518px;" width="15" height="13" viewBox="0 0 15 13"><rect x="0" y="0" width="15" height="13" fill="#a8a8a8"/><path d="M4 2.5v8l7-4z" fill="#474747"/></svg>
<svg class="a" style="left:948px;top:518px;" width="15" height="13" viewBox="0 0 15 13"><rect x="0" y="0" width="15" height="13" fill="#a8a8a8"/><circle cx="7.5" cy="6.5" r="3.5" fill="#474747"/></svg>
<svg class="a" style="left:971px;top:515px;" width="13" height="16" viewBox="0 0 13 16"><path d="M3 7V5a3.5 3.5 0 0 1 7 0v2" stroke="#a8a8a8" stroke-width="2" fill="none"/><rect x="0" y="7" width="13" height="9" fill="#a8a8a8"/><path d="M6.5 10v3" stroke="#474747" stroke-width="1.5"/></svg>
<svg class="a" style="left:993px;top:515px;" width="17" height="16" viewBox="0 0 17 16"><path d="M7 0v9l6-4.5z" fill="#a8a8a8"/><path d="M0.5 10v5.5h16V10M4.5 13v2.5M8.5 12v3.5M12.5 13v2.5" stroke="#a8a8a8" stroke-width="1.5" fill="none"/></svg>
<div class="a" style="left:1015px;top:513px;width:47px;height:22px;background:#3c3c3c;border-radius:2px"></div>
<div class="a t tb" style="left:1031px;top:518.92px;font-size:12.5px;font-weight:bold;color:#ececec">50</div>
<div class="a" style="left:43px;top:539px;width:1038px;height:1px;background:#000"></div>
<div class="a" style="left:43px;top:540px;width:1038px;height:1px;background:#666"></div>
<div class="a" style="left:43px;top:541px;width:1038px;height:24px;background:#353535"></div>
<div class="a" style="left:44px;top:541px;width:22px;height:23px;background:#2e2e2e"></div>
<div class="a" style="left:46px;top:544px;width:16px;height:16px;background:linear-gradient(90deg,#b9b9b9 0 8px,#7b7b7b 8px);"></div>
<div class="a" style="left:46px;top:552px;width:8px;height:8px;background:#9a9a9a"></div>
<div class="a" style="left:67px;top:543px;width:110px;height:23px;background:#3e3e3e;border-radius:3px 3px 0 0;border:1px solid #2c2c2c;border-bottom:none"></div>
<div class="a t tb" style="left:78px;top:548.67px;font-size:12.2px;color:#dedede;letter-spacing:0.1px">Node Graph</div>
<svg class="a" style="left:157px;top:551px;" width="8" height="8" viewBox="0 0 8 8"><path d="M1 1l6 6M7 1l-6 6" stroke="#8c8c8c" stroke-width="1.8"/></svg>
<div class="a" style="left:178px;top:546px;width:114px;height:19px;background:#383838;border:1px solid #2c2c2c;border-bottom:none;border-radius:3px 3px 0 0"></div>
<div class="a t tb" style="left:190px;top:549.67px;font-size:12.2px;color:#dadada;letter-spacing:0.1px">Curve Editor</div>
<svg class="a" style="left:268px;top:548px;" width="14" height="14" viewBox="0 0 14 14"><circle cx="7" cy="7" r="6" fill="#2d2d2d"/><path d="M4.5 4.5l5 5M9.5 4.5l-5 5" stroke="#5a5a5a" stroke-width="1.6"/></svg>
<div class="a" style="left:292px;top:546px;width:109px;height:19px;background:#383838;border:1px solid #2c2c2c;border-bottom:none;border-radius:3px 3px 0 0"></div>
<div class="a t tb" style="left:304px;top:549.67px;font-size:12.2px;color:#dadada;letter-spacing:0.1px">Dope Sheet</div>
<svg class="a" style="left:379px;top:548px;" width="14" height="14" viewBox="0 0 14 14"><circle cx="7" cy="7" r="6" fill="#2d2d2d"/><path d="M4.5 4.5l5 5M9.5 4.5l-5 5" stroke="#5a5a5a" stroke-width="1.6"/></svg>
<div class="a" style="left:43px;top:565px;width:1038px;height:492px;background:#3a3a3a"></div>
<div class="a" style="left:43px;top:565px;width:3px;height:492px;background:linear-gradient(90deg,#434343,#3a3a3a)"></div>
<svg class="a" style="left:154px;top:680.3px;" width="80" height="100" viewBox="0 0 80 100">
<path d="M8.5 4.4L22.0 26.0" stroke="#000" stroke-width="3.2"/>
<path d="M17.0 24.0L24.6 32.5L23.5 21.0z" fill="#000" stroke="#000" stroke-width="1.5"/>
<path d="M73.0 4.4L58.5 28.0" stroke="#000" stroke-width="3.2"/>
<path d="M54.8 34.0L56.0 24.0L62.0 28.0z" fill="#000" stroke="#000" stroke-width="1"/>
<circle cx="40" cy="60" r="29.2" fill="#990000" stroke="#3b2020" stroke-width="1"/>
<path d="M36 89.5h8L40 96z" fill="#000"/>
</svg>
<div class="a t " style="left:173px;top:737.3px;font-size:10px;color:#1a0000;letter-spacing:0.1px">Camera1</div>
<div class="a t " style="left:158px;top:685.8px;font-size:10.5px;color:#f5c060;letter-spacing:-0.2px">look</div>
<div class="a t " style="left:210px;top:699.3px;font-size:10.5px;color:#f5c060;letter-spacing:-0.2px">axis</div>
<svg class="a" style="left:263px;top:679.5px;" width="80" height="100" viewBox="0 0 80 100">
<path d="M8.5 4.4L22.0 26.0" stroke="#000" stroke-width="3.2"/>
<path d="M17.0 24.0L24.6 32.5L23.5 21.0z" fill="#000" stroke="#000" stroke-width="1.5"/>
<path d="M73.0 4.4L58.5 28.0" stroke="#000" stroke-width="3.2"/>
<path d="M54.8 34.0L56.0 24.0L62.0 28.0z" fill="#000" stroke="#000" stroke-width="1"/>
<circle cx="40" cy="60" r="29.2" fill="#990000" stroke="#3b2020" stroke-width="1"/>
<path d="M36 89.5h8L40 96z" fill="#000"/>
</svg>
<div class="a t " style="left:282px;top:736.5px;font-size:10px;color:#1a0000;letter-spacing:0.1px">Camera2</div>
<div class="a t " style="left:267px;top:685.0px;font-size:10.5px;color:#f5c060;letter-spacing:-0.2px">look</div>
<div class="a t " style="left:319px;top:698.5px;font-size:10.5px;color:#f5c060;letter-spacing:-0.2px">axis</div>
<div class="a" style="left:427px;top:626px;width:4px;height:160px;background:#36393c"></div>
<div class="a" style="left:431px;top:622px;width:540px;height:164px;background:#7f7444;box-shadow:inset 0 0 0 1px #868040"></div>
<div class="a" style="left:433px;top:624px;width:537px;height:14px;background:#f7ce6e"></div>
<div class="a t " style="left:433px;top:624px;width:537px;text-align:center;font-size:10.8px;color:#000;-webkit-text-stroke:0.15px #000">BackdropNode1</div>
<div class="a t " style="left:459.5px;top:642px;font-size:37px;color:#000;letter-spacing:-0.3px">Plate</div>
<svg class="a" style="left:955px;top:770px;" width="16" height="16" viewBox="0 0 16 16"><path d="M16 0V16H0z" fill="#f2cd74"/></svg>
<svg class="a" style="left:436px;top:653px;" width="22" height="20" viewBox="0 0 22 20"><rect x="8.6" y="1.2" width="12.6" height="17.8" rx="3" fill="none" stroke="#1c1c24" stroke-width="3"/><rect x="8.6" y="1.2" width="12.6" height="17.8" rx="3" fill="none" stroke="#c8c8d0" stroke-width="1.4"/><rect x="11" y="3.2" width="7.8" height="13.8" fill="none" stroke="#1c1c24" stroke-width="1.2"/><rect x="0.6" y="5.3" width="16.4" height="9.3" fill="#9acd32" stroke="#1c1c24" stroke-width="1"/><path d="M2.8 5.8v8.4M4.9 5.8v8.4M7 5.8v8.4" stroke="#1c1c24" stroke-width="0.9"/><path d="M13.5 5.8l3 2.5" stroke="#1c1c24" stroke-width="1"/></svg>
<div class="a" style="left:441px;top:702px;width:80px;height:74px;background:#d2d2d2;border:1px solid #3a3424"></div>
<div class="a" style="left:444px;top:703px;width:74px;height:71px;background:#f7b95b"></div>
<svg class="a" style="left:448px;top:704px;" width="65" height="43" viewBox="0 0 65 43"><defs><linearGradient id="sn" x1="0" y1="0" x2="0" y2="1"><stop offset="0" stop-color="#0a1e48"/><stop offset="0.5" stop-color="#1e3a6a"/><stop offset="1" stop-color="#5a78a0"/></linearGradient>
<linearGradient id="sn2" x1="0" y1="0" x2="0" y2="1"><stop offset="0" stop-color="#d8dce4"/><stop offset="1" stop-color="#a4aab6"/></linearGradient>
<filter id="tb1" x="-30%" y="-30%" width="160%" height="160%"><feGaussianBlur stdDeviation="1.5"/></filter></defs>
<rect width="65" height="43" fill="url(#sn)"/>
<path d="M0 22L20 30L40 33L65 28V43H0z" fill="url(#sn2)"/>
<g filter="url(#tb1)">
<path d="M0 10L8 16L16 22L26 24L38 20L50 18L62 21L60 26L40 32L20 30L0 22z" fill="#eef2f6" opacity="0.9"/>
<ellipse cx="32" cy="26" rx="12" ry="5" fill="#ffffff"/>
<ellipse cx="58" cy="5" rx="5" ry="3" fill="#a8b8d0" opacity="0.7"/>
<ellipse cx="27" cy="10" rx="3" ry="3" fill="#8898b8" opacity="0.6"/>
</g></svg>
<div class="a t " style="left:441px;top:751.5px;width:80px;text-align:center;font-size:10.5px;color:#000;letter-spacing:0px;-webkit-text-stroke:0.2px #000">Read1</div>
<div class="a t " style="left:439px;top:761.5px;width:84px;text-align:center;font-size:10.5px;color:#000;letter-spacing:0px;-webkit-text-stroke:0.2px #000">bg_snow_01.jpg</div>
<div class="a" style="left:444px;top:771px;width:7px;height:3px;background:#ff0000"></div>
<div class="a" style="left:451px;top:771px;width:8px;height:3px;background:#00ff00"></div>
<div class="a" style="left:459px;top:771px;width:7px;height:3px;background:#0033ff"></div>
<svg class="a" style="left:476px;top:776px;" width="10" height="8" viewBox="0 0 10 8"><path d="M0.5 0h9L5 7z" fill="#000"/></svg>
<div class="a" style="left:551px;top:702px;width:80px;height:74px;background:#d2d2d2;border:1px solid #3a3424"></div>
<div class="a" style="left:554px;top:703px;width:74px;height:71px;background:#f7b95b"></div>
<svg class="a" style="left:560px;top:704px;" width="64" height="43" viewBox="0 0 64 43"><defs><linearGradient id="st" x1="0" y1="0" x2="0" y2="1"><stop offset="0" stop-color="#1a2e36"/><stop offset="0.5" stop-color="#284850"/><stop offset="0.68" stop-color="#5a6a68"/><stop offset="0.76" stop-color="#b08060"/><stop offset="1" stop-color="#3a2818"/></linearGradient>
<radialGradient id="glw" cx="0.5" cy="0.5" r="0.5"><stop offset="0" stop-color="#f0a070" stop-opacity="0.9"/><stop offset="1" stop-color="#f0a070" stop-opacity="0"/></radialGradient></defs>
<rect width="64" height="43" fill="url(#st)"/>
<ellipse cx="20" cy="31" rx="22" ry="4" fill="url(#glw)"/>
<path d="M0 33L15 32L30 30L38 27L45 29L55 31L64 33V43H0z" fill="#6a4a2c"/>
<path d="M0 37L30 35L64 36V43H0z" fill="#3e2c1a"/><circle cx="15.2" cy="13.1" r="0.3" fill="#cdd"/><circle cx="23.7" cy="14.5" r="0.3" fill="#cdd"/><circle cx="40.0" cy="1.6" r="0.3" fill="#cdd"/><circle cx="0.8" cy="20.1" r="0.3" fill="#cdd"/><circle cx="16.6" cy="5.6" r="0.3" fill="#cdd"/><circle cx="63.7" cy="11.3" r="0.3" fill="#cdd"/><circle cx="53.5" cy="11.4" r="0.3" fill="#cdd"/><circle cx="40.9" cy="3.6" r="0.3" fill="#cdd"/><circle cx="40.6" cy="20.8" r="0.3" fill="#cdd"/><circle cx="33.5" cy="17.8" r="0.3" fill="#cdd"/><circle cx="43.0" cy="1.5" r="0.3" fill="#cdd"/><circle cx="48.5" cy="14.2" r="0.3" fill="#cdd"/><circle cx="19.3" cy="0.7" r="0.3" fill="#cdd"/><circle cx="55.4" cy="11.3" r="0.3" fill="#cdd"/><circle cx="46.0" cy="21.1" r="0.3" fill="#cdd"/><circle cx="45.7" cy="22.1" r="0.3" fill="#cdd"/><circle cx="25.3" cy="19.2" r="0.3" fill="#cdd"/><circle cx="28.5" cy="22.5" r="0.3" fill="#cdd"/></svg>
<div class="a t " style="left:551px;top:751.5px;width:80px;text-align:center;font-size:10.5px;color:#000;letter-spacing:0px;-webkit-text-stroke:0.2px #000">Read2</div>
<div class="a t " style="left:549px;top:761.5px;width:84px;text-align:center;font-size:10.5px;color:#000;letter-spacing:0px;-webkit-text-stroke:0.2px #000">bg01.jpg</div>
<div class="a" style="left:554px;top:771px;width:7px;height:3px;background:#ff0000"></div>
<div class="a" style="left:561px;top:771px;width:8px;height:3px;background:#00ff00"></div>
<div class="a" style="left:569px;top:771px;width:7px;height:3px;background:#0033ff"></div>
<svg class="a" style="left:586px;top:776px;" width="10" height="8" viewBox="0 0 10 8"><path d="M0.5 0h9L5 7z" fill="#000"/></svg>
<div class="a" style="left:661px;top:702px;width:80px;height:74px;background:#d2d2d2;border:1px solid #3a3424"></div>
<div class="a" style="left:664px;top:703px;width:74px;height:71px;background:#f7b95b"></div>
<svg class="a" style="left:669px;top:704px;" width="64" height="43" viewBox="0 0 64 43"><defs><linearGradient id="pu" x1="0" y1="0" x2="0" y2="1"><stop offset="0" stop-color="#1e1440"/><stop offset="0.3" stop-color="#4a3078"/><stop offset="0.5" stop-color="#b070b8"/><stop offset="0.62" stop-color="#504880"/><stop offset="0.66" stop-color="#a8c0e8"/><stop offset="0.72" stop-color="#101018"/><stop offset="1" stop-color="#050508"/></linearGradient></defs>
<rect width="64" height="43" fill="url(#pu)"/>
<ellipse cx="12" cy="21" rx="14" ry="3.5" fill="#e0a8e0" opacity="0.7"/>
<path d="M28 10L40 8L52 12L64 10V27L50 26L38 22L30 16z" fill="#20183a" opacity="0.85"/>
<path d="M20 6L28 4L32 8L26 10z" fill="#2a2050" opacity="0.8"/>
<path d="M0 28.5H64" stroke="#c0d8f8" stroke-width="0.8" opacity="0.8"/>
<path d="M30 30h20" stroke="#8090c0" stroke-width="0.8" opacity="0.6"/></svg>
<div class="a t " style="left:661px;top:751.5px;width:80px;text-align:center;font-size:10.5px;color:#000;letter-spacing:0px;-webkit-text-stroke:0.2px #000">Read3</div>
<div class="a t " style="left:659px;top:761.5px;width:84px;text-align:center;font-size:10.5px;color:#000;letter-spacing:0px;-webkit-text-stroke:0.2px #000">bg02a.jpg</div>
<div class="a" style="left:664px;top:771px;width:7px;height:3px;background:#ff0000"></div>
<div class="a" style="left:671px;top:771px;width:8px;height:3px;background:#00ff00"></div>
<div class="a" style="left:679px;top:771px;width:7px;height:3px;background:#0033ff"></div>
<svg class="a" style="left:696px;top:776px;" width="10" height="8" viewBox="0 0 10 8"><path d="M0.5 0h9L5 7z" fill="#000"/></svg>
<div class="a" style="left:771px;top:702px;width:80px;height:74px;background:#d2d2d2;border:1px solid #3a3424"></div>
<div class="a" style="left:774px;top:703px;width:74px;height:71px;background:#f7b95b"></div>
<svg class="a" style="left:773px;top:704px;" width="77" height="43" viewBox="0 0 77 43"><defs><linearGradient id="ci" x1="0" y1="0" x2="0" y2="1"><stop offset="0" stop-color="#b8b4c4"/><stop offset="0.6" stop-color="#d8c0b0"/><stop offset="1" stop-color="#e0b890"/></linearGradient></defs>
<rect width="77" height="43" fill="url(#ci)"/>
<path d="M0 9h6V5h2v4h3V3h2v6h4v3h5v5h3v8H0z" fill="#2e2624"/>
<path d="M45 10h4V8h6V5h8v3h6v2h8v15H45z" fill="#2e2624"/>
<path d="M30 14h6v11h-6zM37 15h8v10h-8z" fill="#4a403e"/>
<g fill="#e0a050" opacity="0.8"><rect x="2" y="13" width="20" height="1"/><rect x="2" y="16" width="20" height="1"/><rect x="2" y="19" width="20" height="1"/><rect x="47" y="13" width="28" height="1"/><rect x="47" y="16" width="28" height="1"/><rect x="47" y="19" width="28" height="1"/></g>
<path d="M0 25h77v18H0z" fill="#3a3a3e"/>
<path d="M0 25L36 26L77 25V28L0 30z" fill="#4a4a50"/>
<path d="M28 43L36 27M44 43L39 27" stroke="#d8d8d8" stroke-width="0.9"/>
<path d="M56 32h21v11H56z" fill="#a05a48"/><path d="M58 30h15v3H58z" fill="#c8c8d0"/></svg>
<div class="a t " style="left:771px;top:751.5px;width:80px;text-align:center;font-size:10.5px;color:#000;letter-spacing:0px;-webkit-text-stroke:0.2px #000">Read4</div>
<div class="a t " style="left:769px;top:761.5px;width:84px;text-align:center;font-size:10.5px;color:#000;letter-spacing:0px;-webkit-text-stroke:0.2px #000">city.jpg</div>
<div class="a" style="left:774px;top:771px;width:7px;height:3px;background:#ff0000"></div>
<div class="a" style="left:781px;top:771px;width:8px;height:3px;background:#00ff00"></div>
<div class="a" style="left:789px;top:771px;width:7px;height:3px;background:#0033ff"></div>
<svg class="a" style="left:806px;top:776px;" width="10" height="8" viewBox="0 0 10 8"><path d="M0.5 0h9L5 7z" fill="#000"/></svg>
<div class="a" style="left:881px;top:702px;width:80px;height:74px;background:#d2d2d2;border:1px solid #3a3424"></div>
<div class="a" style="left:884px;top:703px;width:74px;height:71px;background:#f7b95b"></div>
<svg class="a" style="left:888.5px;top:704px;" width="65" height="43" viewBox="0 0 65 43">
<defs>
<linearGradient id="sky" x1="0" y1="112" x2="0" y2="280" gradientUnits="userSpaceOnUse">
<stop offset="0" stop-color="#c49a7a"/><stop offset="0.12" stop-color="#cba47e"/><stop offset="0.3" stop-color="#dcbc88"/>
<stop offset="0.5" stop-color="#e8cf90"/><stop offset="0.75" stop-color="#f1da9a"/><stop offset="1" stop-color="#f5e0a6"/></linearGradient>
<filter id="b8" x="-50%" y="-50%" width="200%" height="200%"><feGaussianBlur stdDeviation="8"/></filter>
<filter id="b4" x="-50%" y="-50%" width="200%" height="200%"><feGaussianBlur stdDeviation="4"/></filter>
<filter id="b2" x="-30%" y="-30%" width="160%" height="160%"><feGaussianBlur stdDeviation="2"/></filter>
<filter id="b1" x="-20%" y="-20%" width="140%" height="140%"><feGaussianBlur stdDeviation="0.8"/></filter><filter id="b05" x="-10%" y="-10%" width="120%" height="120%"><feGaussianBlur stdDeviation="0.45"/></filter>
<linearGradient id="gnd" x1="0" y1="296" x2="0" y2="433" gradientUnits="userSpaceOnUse">
<stop offset="0" stop-color="#47392e"/><stop offset="0.5" stop-color="#483a2f"/><stop offset="1" stop-color="#46392f"/></linearGradient>
<linearGradient id="hull" x1="0" y1="270" x2="0" y2="375" gradientUnits="userSpaceOnUse">
<stop offset="0" stop-color="#525242"/><stop offset="0.35" stop-color="#4c5042"/><stop offset="0.7" stop-color="#38342a"/><stop offset="1" stop-color="#241c16"/></linearGradient>
<linearGradient id="hull2" x1="600" y1="300" x2="680" y2="385" gradientUnits="userSpaceOnUse">
<stop offset="0" stop-color="#2a2019"/><stop offset="0.45" stop-color="#3a3026"/><stop offset="0.8" stop-color="#625848"/><stop offset="1" stop-color="#3e342a"/></linearGradient>
</defs>
<g transform="scale(0.1351 0.134) translate(-321 -112)">
<rect x="321" y="112" width="481" height="321" fill="url(#sky)"/>
<g filter="url(#b8)">
<ellipse cx="360" cy="165" rx="22" ry="12" fill="#e8c488" opacity="0.7"/>
<ellipse cx="470" cy="172" rx="35" ry="7" fill="#ecd29a" opacity="0.6"/>
<ellipse cx="580" cy="130" rx="40" ry="10" fill="#e6c898" opacity="0.45"/>
<ellipse cx="745" cy="132" rx="45" ry="22" fill="#f6dc96" opacity="0.9"/><ellipse cx="795" cy="118" rx="20" ry="14" fill="#f2cc88" opacity="0.9"/>
<path d="M730 175Q770 140 802 140V215Q770 205 745 190z" fill="#c88a62" opacity="0.9"/>
<ellipse cx="790" cy="185" rx="22" ry="18" fill="#b47c5a" opacity="0.7"/>
<ellipse cx="610" cy="138" rx="70" ry="16" fill="#c8a07e" opacity="0.35"/>
<ellipse cx="650" cy="262" rx="40" ry="5" fill="#c8a088" opacity="0.4"/>
</g>
<!-- far hills left -->
<path d="M321 262L360 262L420 264L480 269L540 272L575 276L590 280L321 281z" fill="#9a8456"/>
<g filter="url(#b1)"><path d="M340 270L420 268L480 273L560 277L420 276z" fill="#7a6a46" opacity="0.7"/><path d="M321 276L450 277L560 279L590 281L321 281z" fill="#8a7a50" opacity="0.6"/></g>
<!-- water -->
<path d="M321 279L590 279L640 284L802 290L802 340L321 340z" fill="#cbbb96"/>
<g filter="url(#b2)"><path d="M620 300L802 305L802 330L640 328z" fill="#d6c6a2" opacity="0.7"/>
<path d="M680 320L720 318L740 322L700 324z" fill="#8a7a60" opacity="0.35"/><path d="M740 312L790 311L800 315L760 316z" fill="#8a7a60" opacity="0.3"/></g>
<!-- right land -->
<g filter="url(#b1)">
<path d="M585 281L640 276L700 274L705 266L712 274L730 268L760 270L790 264L802 262L802 292L760 290L700 286L640 284L600 284z" fill="#5a5236"/>
<path d="M610 284L700 287L802 292L802 298L700 292L620 288z" fill="#3e3424"/>
</g>
<!-- beach -->
<path d="M321 296L410 296L430 302L450 310L520 310L600 320L690 333L802 333L802 433L321 433z" fill="url(#gnd)"/>
<g filter="url(#b4)">
<path d="M330 300L400 300L430 320L420 350L380 370L330 380z" fill="#3e3228" opacity="0.55"/>
<path d="M380 340L440 330L470 360L460 400L400 420L380 400z" fill="#56463a" opacity="0.4"/>
<path d="M440 340L600 375L700 388L690 400L560 395L450 370z" fill="#231c16" opacity="0.9"/>
</g>

<g filter="url(#b05)">
<!-- left boat -->
<path d="M436 312L470 300L530 282L563 268L572 285L580 320L585 350L590 376L540 372L490 360L462 345L440 325z" fill="url(#hull)"/>
<path d="M436 312L470 298L530 280L563 268L566 290L520 300L462 322L440 325z" fill="#5a4a36"/>
<path d="M462 322L566 292" stroke="#6a6a54" stroke-width="2" opacity="0.7"/><path d="M560 266L572 290" stroke="#7a4a2a" stroke-width="4"/>
<path d="M470 333L572 305M478 343L576 320M490 352L580 336" stroke="#5e6656" stroke-width="1.2" opacity="0.35"/>
<path d="M563 268L574 290L580 320L586 350L590 376" stroke="#6a4a30" stroke-width="3" fill="none" opacity="0.8"/>
<path d="M540 345L586 350" stroke="#6a3a28" stroke-width="2" opacity="0.6"/>
<path d="M551 242L566 268" stroke="#3a3028" stroke-width="1.2"/>
<path d="M558 254L545 262M556 258L575 280" stroke="#3a3028" stroke-width="0.6"/>
<path d="M455 281L472 299" stroke="#4a3a2a" stroke-width="3"/>
<!-- right boat -->
<path d="M570 292L600 296L640 290L664 294L672 320L679 355L690 386L640 385L600 383L583 381L575 340z" fill="url(#hull2)"/>
<path d="M570 292L600 296L640 290L664 294L655 305L620 330L590 345L576 340z" fill="#3c3024"/>
<path d="M600 302L650 296M595 320L640 305M600 333L630 318" stroke="#7a6a50" stroke-width="1.5" opacity="0.3"/>
<path d="M664 294L672 320L679 355L690 386L684 386L670 350L660 310z" fill="#9a8870"/>
<path d="M615 350L668 325L678 365L684 383L630 380z" fill="#6c6250" opacity="0.6"/>
<path d="M568 290L582 300L588 340L584 380L574 378z" fill="#525646"/>
<path d="M572 345L588 348L586 380L574 378z" fill="#3a2a20"/>
<path d="M586 345L592 385M596 345L602 385M586 355h11M587 365h11M588 375h11" stroke="#6a3a28" stroke-width="1"/>
<path d="M570 384L690 388L680 395L580 392z" fill="#231c16" opacity="0.8"/>
</g>
</g>
</svg>
<div class="a t " style="left:881px;top:751.5px;width:80px;text-align:center;font-size:10.5px;color:#000;letter-spacing:0px;-webkit-text-stroke:0.2px #000">Read5</div>
<div class="a t " style="left:879px;top:761.5px;width:84px;text-align:center;font-size:10.5px;color:#000;letter-spacing:0px;-webkit-text-stroke:0.2px #000">ship.jpg</div>
<div class="a" style="left:884px;top:771px;width:7px;height:3px;background:#ff0000"></div>
<div class="a" style="left:891px;top:771px;width:8px;height:3px;background:#00ff00"></div>
<div class="a" style="left:899px;top:771px;width:7px;height:3px;background:#0033ff"></div>
<div class="a" style="left:919px;top:777px;width:4px;height:106px;background:repeating-linear-gradient(#000 0 1.6px,transparent 1.6px 4px)"></div>
<svg class="a" style="left:916px;top:883px;" width="9" height="19" viewBox="0 0 9 19"><path d="M4.5 0v12" stroke="#000" stroke-width="2"/><path d="M1 7h7L4.5 18z" fill="#000"/></svg>
<div class="a t " style="left:917.6px;top:884px;font-size:10.5px;font-weight:bold;color:#f6b44c">1</div>
<svg class="a" style="left:876px;top:902px;" width="88" height="18" viewBox="0 0 88 18"><path d="M3.5 9L9 1h75l3.5 8-3.5 8H9z" fill="#d0d0d0" stroke="#2c2c2c" stroke-width="0.8"/><path d="M0.5 6.5L3.5 9 0.5 12z" fill="#000"/></svg>
<div class="a t " style="left:877px;top:907.5px;width:88px;text-align:center;font-size:9.6px;color:#111;letter-spacing:0.1px">Viewer1</div>
<div class="a" style="left:0px;top:1052px;width:5px;height:5px;background:radial-gradient(circle at 100% 0, transparent 4.5px, #f4f4f4 5px)"></div>
<div class="a" style="left:1076px;top:1052px;width:5px;height:5px;background:radial-gradient(circle at 0 0, transparent 4.5px, #f4f4f4 5px)"></div>
</body></html>
